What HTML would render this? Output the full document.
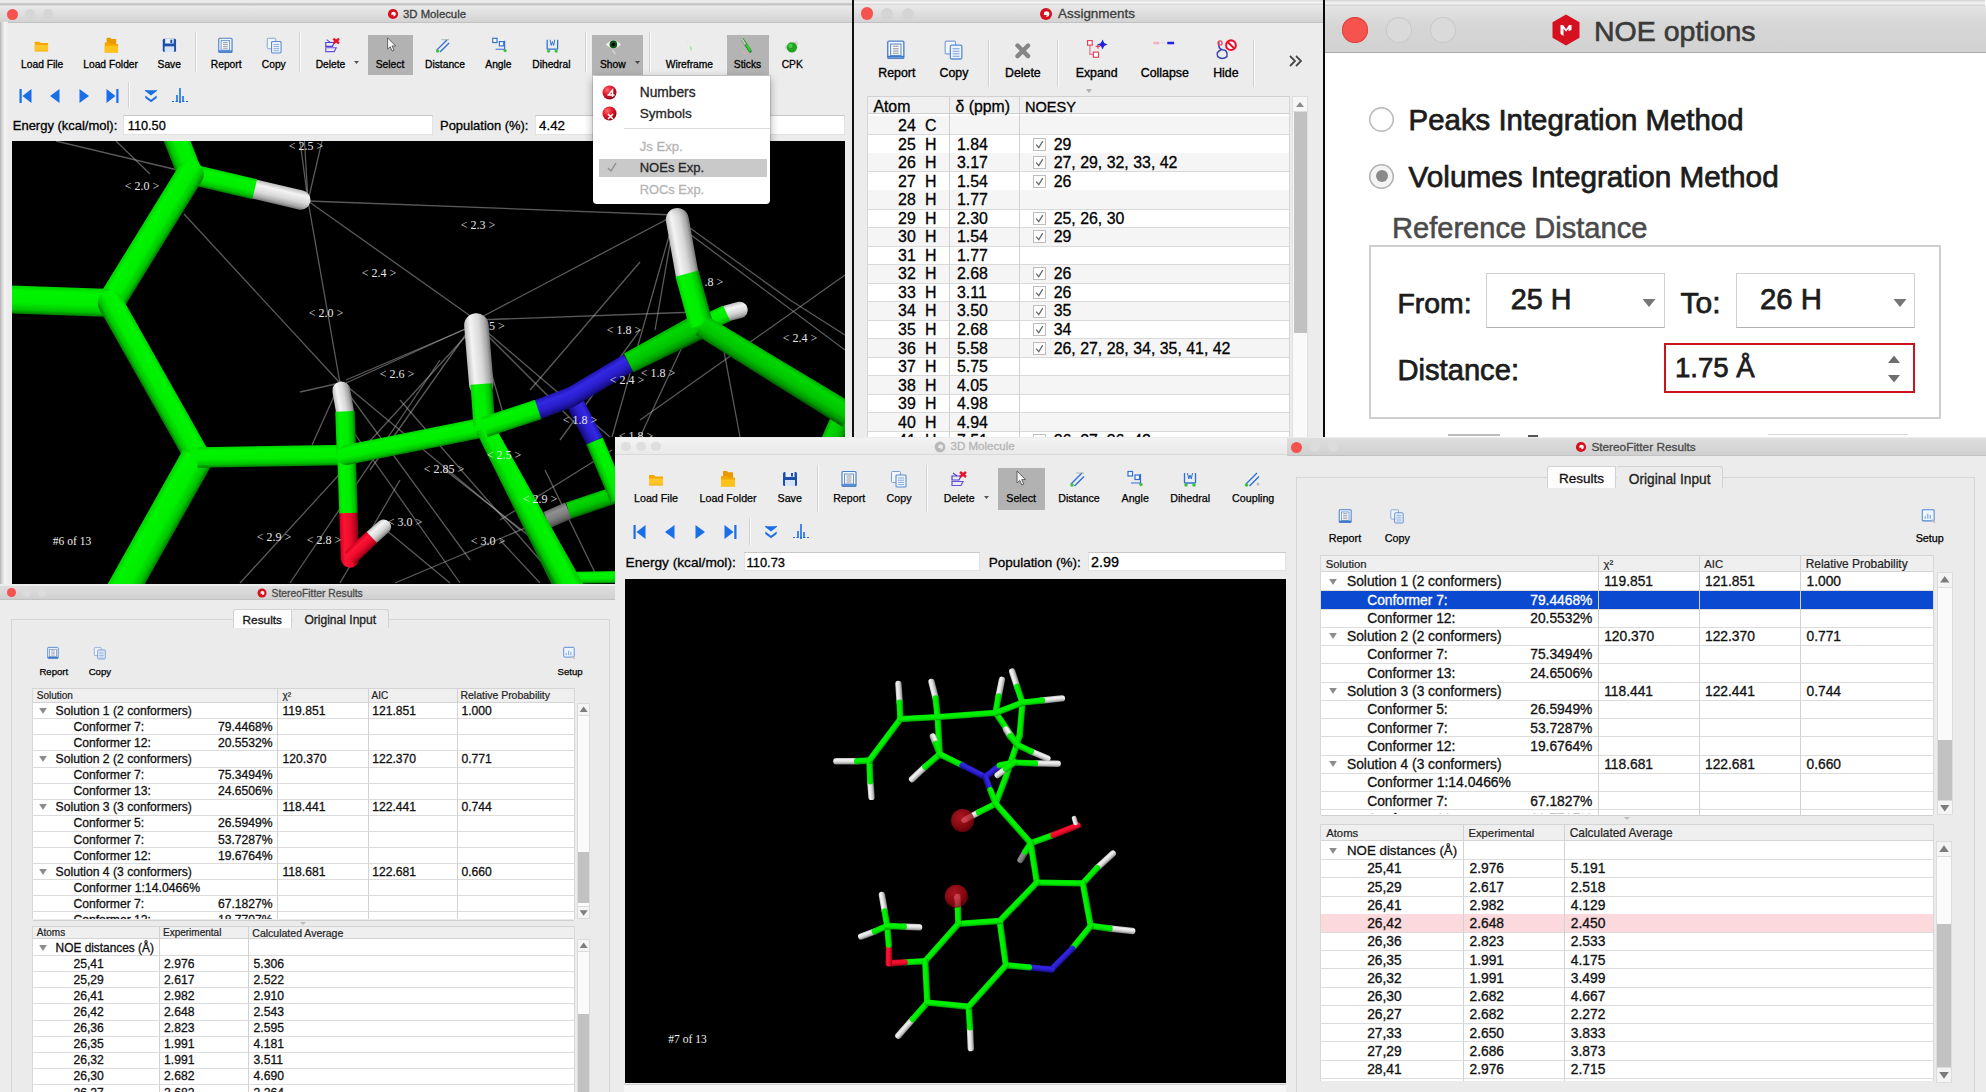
<!DOCTYPE html><html><head><meta charset="utf-8"><title>UI</title><style>html,body{margin:0;padding:0;background:#ececec}
body{width:1986px;height:1092px;overflow:hidden;position:relative;font-family:"Liberation Sans",sans-serif}
#r{position:absolute;left:0;top:0;width:1986px;height:1092px;overflow:hidden}
#r div,#r svg{position:absolute}
.t{white-space:pre;-webkit-text-stroke-width:0.3px}
#r svg{overflow:visible}
</style></head><body><div id="r"><div style="left:0px;top:0px;width:853px;height:590px;background:#ececec;"></div><div style="left:0px;top:0px;width:853px;height:6px;background:linear-gradient(#e6e6e6,#efefef 35%,#bdbdbd 70%,#e2e2e2);"></div><div style="left:0px;top:6px;width:853px;height:17px;background:linear-gradient(#e9e9e9,#d3d3d3);border-bottom:1px solid #c2c2c2;box-sizing:border-box;"></div><div style="left:0px;top:22px;width:8px;height:562px;background:linear-gradient(to right,#b0b0b0,#d8d8d8 25%,#f3f3f3 60%,#ececec);"></div><div style="left:6.5px;top:8.5px;width:11.0px;height:11.0px;background:#f6534f;border-radius:50%;"></div><div style="left:25px;top:9px;width:10px;height:10px;background:#d6d6d6;border-radius:50%;"></div><div style="left:43px;top:9px;width:10px;height:10px;background:#d6d6d6;border-radius:50%;"></div><svg style="left:386px;top:7px;" width="14" height="14" viewBox="0 0 14 14"><g transform="translate(7,7) scale(0.85)"><circle cx="0" cy="0" r="6" fill="#d6101f"/><circle cx="0.6" cy="0" r="2.7" fill="#fff"/><path d="M-2.5,1 L-0.5,3.5 L1,1z" fill="#d6101f"/></g></svg><div class="t" style="top:8px;font-size:11.34px;line-height:12px;color:#3c3c3c;white-space:pre;left:403px;">3D Molecule</div><div style="left:368px;top:35px;width:45px;height:40px;background:#b2b2b2;"></div><div style="left:592px;top:35px;width:51px;height:40px;background:#b4b4b4;"></div><div style="left:727px;top:35px;width:42px;height:40px;background:#b4b4b4;"></div><svg style="left:30.1px;top:34.6px;" width="22.799999999999997" height="22.799999999999997" viewBox="0 0 22.799999999999997 22.799999999999997"><g transform="translate(11.399999999999999,11.399999999999999) scale(0.95)"><path d="M-7,-5 h5 l1.5,1.5 h7.5 v9 h-14z" fill="#f5a800"/><path d="M-7,-1.5 h14 v6 h-14z" fill="#ffc629"/></g></svg><div class="t" style="top:59px;font-size:10.25px;line-height:11px;color:#000;white-space:pre;left:21.12px;-webkit-text-stroke:0.3px #000;">Load File</div><svg style="left:99.6px;top:34.1px;" width="22.799999999999997" height="22.799999999999997" viewBox="0 0 22.799999999999997 22.799999999999997"><g transform="translate(11.399999999999999,11.399999999999999) scale(0.95)"><path d="M-5,-8 h4 l1,1.2 h5 v6 h-10z" fill="#e89a00"/><path d="M-7,-3 h5 l1.5,1.5 h7.5 v9 h-14z" fill="#f5a800"/><path d="M-7,0.5 h14 v7 h-14z" fill="#ffc21a"/></g></svg><div class="t" style="top:59px;font-size:10.25px;line-height:11px;color:#000;white-space:pre;left:83.25px;-webkit-text-stroke:0.3px #000;">Load Folder</div><svg style="left:157.6px;top:34.1px;" width="22.799999999999997" height="22.799999999999997" viewBox="0 0 22.799999999999997 22.799999999999997"><g transform="translate(11.399999999999999,11.399999999999999) scale(0.95)"><rect x="-7" y="-7" width="14" height="14" rx="1.5" fill="#1c4fa8"/><rect x="-4.5" y="-7" width="9" height="5" fill="#e8eefc"/><rect x="1" y="-6" width="2" height="3.5" fill="#1c4fa8"/><rect x="-5" y="1" width="10" height="6" fill="#d8e2f8"/></g></svg><div class="t" style="top:59px;font-size:10.25px;line-height:11px;color:#000;white-space:pre;left:157.57px;-webkit-text-stroke:0.3px #000;">Save</div><div style="left:195px;top:32px;width:1px;height:40px;background:#d2d2d2;"></div><div style="left:196px;top:32px;width:1px;height:40px;background:#fafafa;"></div><svg style="left:213.6px;top:34.1px;" width="22.799999999999997" height="22.799999999999997" viewBox="0 0 22.799999999999997 22.799999999999997"><g transform="translate(11.399999999999999,11.399999999999999) scale(0.95)"><rect x="-7" y="-7.5" width="14" height="15" rx="1" fill="#f6f9fe" stroke="#4a80cc" stroke-width="1.2"/><rect x="-4.5" y="-5" width="9" height="10" fill="none" stroke="#5a86c8" stroke-width="0.9"/><path d="M-2.5,-3h5M-2.5,-1h5M-2.5,1h5M-2.5,3h5" stroke="#8a8f99" stroke-width="0.9"/><path d="M-7,6 h14" stroke="#3f78c9" stroke-width="1.6"/></g></svg><div class="t" style="top:59px;font-size:10.25px;line-height:11px;color:#000;white-space:pre;left:210.82px;-webkit-text-stroke:0.3px #000;">Report</div><svg style="left:262.6px;top:34.1px;" width="22.799999999999997" height="22.799999999999997" viewBox="0 0 22.799999999999997 22.799999999999997"><g transform="translate(11.399999999999999,11.399999999999999) scale(0.95)"><rect x="-7.5" y="-7.5" width="9" height="11" rx="1" fill="#f2f6fc" stroke="#7c9fd2" stroke-width="1"/><rect x="-3" y="-4" width="10" height="12" rx="1" fill="#eef3fb" stroke="#5b8ad0" stroke-width="1.1"/><path d="M-1,-1h6M-1,1.2h6M-1,3.4h6M-1,5.6h6" stroke="#7aa0d8" stroke-width="0.9"/></g></svg><div class="t" style="top:59px;font-size:10.25px;line-height:11px;color:#000;white-space:pre;left:261.79px;-webkit-text-stroke:0.3px #000;">Copy</div><div style="left:299px;top:32px;width:1px;height:40px;background:#d2d2d2;"></div><div style="left:300px;top:32px;width:1px;height:40px;background:#fafafa;"></div><svg style="left:320.6px;top:34.1px;" width="22.799999999999997" height="22.799999999999997" viewBox="0 0 22.799999999999997 22.799999999999997"><g transform="translate(11.399999999999999,11.399999999999999) scale(0.95)"><path d="M-7,-3 h9 l-2,4 h-7z" fill="none" stroke="#4a3fd0" stroke-width="1.2"/><path d="M-7,2.5 h11 l-2,4 h-9z" fill="none" stroke="#6a4fe0" stroke-width="1.2"/><path d="M-6,-6 l4,3" stroke="#4a3fd0" stroke-width="1.1"/><path d="M1,-7 l6,5 M7,-7 l-6,5" stroke="#e8102a" stroke-width="2.4"/></g></svg><div class="t" style="top:59px;font-size:10.25px;line-height:11px;color:#000;white-space:pre;left:315.64px;-webkit-text-stroke:0.3px #000;">Delete</div><svg style="left:353px;top:60px;" width="8" height="5" viewBox="0 0 8 5"><path d="M1,1 h5 l-2.5,3z" fill="#555"/></svg><svg style="left:378.6px;top:34.1px;" width="22.799999999999997" height="22.799999999999997" viewBox="0 0 22.799999999999997 22.799999999999997"><g transform="translate(11.399999999999999,11.399999999999999) scale(0.95)"><path d="M-3,-8 v12 l2.8,-2.6 2,4.6 2,-0.9 -2,-4.5 3.8,0z" fill="#f4f4f4" stroke="#555" stroke-width="0.9"/></g></svg><div class="t" style="top:59px;font-size:10.25px;line-height:11px;color:#000;white-space:pre;left:375.76px;-webkit-text-stroke:0.3px #000;">Select</div><svg style="left:430.6px;top:34.1px;" width="22.799999999999997" height="22.799999999999997" viewBox="0 0 22.799999999999997 22.799999999999997"><g transform="translate(11.399999999999999,11.399999999999999) scale(0.95)"><path d="M-6,5 L5,-6 M-2.5,7 L7,-2.5" stroke="#2d6fd6" stroke-width="1.4"/><path d="M-1,-6 h8" stroke="#9aa" stroke-width="0.8"/><circle cx="-5" cy="6" r="1.8" fill="#3fc23f"/></g></svg><div class="t" style="top:59px;font-size:10.25px;line-height:11px;color:#000;white-space:pre;left:425.06px;-webkit-text-stroke:0.3px #000;">Distance</div><svg style="left:488.1px;top:34.1px;" width="22.799999999999997" height="22.799999999999997" viewBox="0 0 22.799999999999997 22.799999999999997"><g transform="translate(11.399999999999999,11.399999999999999) scale(0.95)"><rect x="-7" y="-7.5" width="4.5" height="4.5" fill="#fff" stroke="#2d6fd6" stroke-width="1.2"/><rect x="0" y="-4" width="4.5" height="4.5" fill="#fff" stroke="#2d6fd6" stroke-width="1.2"/><path d="M-4,4 h10 M5.5,-5 v11" stroke="#2d6fd6" stroke-width="1.2"/><circle cx="6" cy="5.5" r="1.7" fill="#3fc23f"/></g></svg><div class="t" style="top:59px;font-size:10.25px;line-height:11px;color:#000;white-space:pre;left:485.34px;-webkit-text-stroke:0.3px #000;">Angle</div><svg style="left:540.6px;top:34.1px;" width="22.799999999999997" height="22.799999999999997" viewBox="0 0 22.799999999999997 22.799999999999997"><g transform="translate(11.399999999999999,11.399999999999999) scale(0.95)"><path d="M-5.5,-6 v10 M5.5,-6 v10 M-5.5,4 h11" stroke="#2d6fd6" stroke-width="1.3" fill="none"/><path d="M-2.5,-6 l1.2,6 1.3,-4 1.3,4 1.2,-6" stroke="#2d6fd6" stroke-width="1" fill="none"/><circle cx="-4" cy="6" r="1.8" fill="#3fc23f"/><circle cx="4" cy="6" r="1.8" fill="#3fc23f"/></g></svg><div class="t" style="top:59px;font-size:10.25px;line-height:11px;color:#000;white-space:pre;left:532.26px;-webkit-text-stroke:0.3px #000;">Dihedral</div><div style="left:585px;top:32px;width:1px;height:40px;background:#d2d2d2;"></div><div style="left:586px;top:32px;width:1px;height:40px;background:#fafafa;"></div><svg style="left:601.6px;top:33.1px;" width="22.799999999999997" height="22.799999999999997" viewBox="0 0 22.799999999999997 22.799999999999997"><g transform="translate(11.399999999999999,11.399999999999999) scale(0.95)"><path d="M-8,0 Q0,-8 8,0 Q0,8 -8,0z" fill="#f2f2f2" stroke="#cfcfcf" stroke-width="0.6"/><circle cx="0" cy="0" r="4" fill="#0b5a0b"/><circle cx="0" cy="0" r="2" fill="#000"/><path d="M-1,6 l3,4" stroke="#ddd" stroke-width="1.2"/></g></svg><div class="t" style="top:59px;font-size:10.25px;line-height:11px;color:#000;white-space:pre;left:600.03px;-webkit-text-stroke:0.3px #000;">Show</div><svg style="left:634px;top:60px;" width="8" height="5" viewBox="0 0 8 5"><path d="M1,1 h5 l-2.5,3z" fill="#444"/></svg><div style="left:649px;top:32px;width:1px;height:40px;background:#d2d2d2;"></div><div style="left:650px;top:32px;width:1px;height:40px;background:#fafafa;"></div><svg style="left:678.6px;top:34.6px;" width="22.799999999999997" height="22.799999999999997" viewBox="0 0 22.799999999999997 22.799999999999997"><g transform="translate(11.399999999999999,11.399999999999999) scale(0.95)"><path d="M-4,-6 L1,2 L1,7" stroke="#e8e8e8" stroke-width="1.6" fill="none"/><path d="M0,0 L1,4" stroke="#9fe89f" stroke-width="1.6"/></g></svg><div class="t" style="top:59px;font-size:10.25px;line-height:11px;color:#000;white-space:pre;left:665.72px;-webkit-text-stroke:0.3px #000;">Wireframe</div><svg style="left:735.6px;top:34.6px;" width="22.799999999999997" height="22.799999999999997" viewBox="0 0 22.799999999999997 22.799999999999997"><g transform="translate(11.399999999999999,11.399999999999999) scale(0.95)"><path d="M-5,-7 L3,5" stroke="#1e8a1e" stroke-width="3.2" stroke-linecap="round"/><path d="M-6,-8 L-2,-2" stroke="#c8c8c8" stroke-width="2"/><path d="M-1,-2 L3,5" stroke="#2ed12e" stroke-width="2"/><path d="M-6,4 L-2,8" stroke="#d8b0b0" stroke-width="1.5"/></g></svg><div class="t" style="top:59px;font-size:10.25px;line-height:11px;color:#000;white-space:pre;left:733.83px;-webkit-text-stroke:0.3px #000;">Sticks</div><svg style="left:780.1px;top:34.6px;" width="22.799999999999997" height="22.799999999999997" viewBox="0 0 22.799999999999997 22.799999999999997"><g transform="translate(11.399999999999999,11.399999999999999) scale(0.95)"><circle cx="-4" cy="1" r="3" fill="#d9d9d9"/><circle cx="4.5" cy="-3" r="2.5" fill="#e8c8d8"/><circle cx="0.5" cy="1" r="5.5" fill="#1fa51f"/><circle cx="-1" cy="-0.5" r="2.2" fill="#48cf48"/><circle cx="1" cy="-6" r="2" fill="#e8e8e8"/></g></svg><div class="t" style="top:59px;font-size:10.25px;line-height:11px;color:#000;white-space:pre;left:781.66px;-webkit-text-stroke:0.3px #000;">CPK</div><svg style="left:16.5px;top:87px;" width="18" height="18" viewBox="0 0 18 18"><g transform="translate(9,9) scale(1.0)"><rect x="-6.5" y="-7" width="2.2" height="14" fill="#1a6fe8"/><path d="M5.5,-7 v14 l-9,-7z" fill="#1a6fe8"/></g></svg><svg style="left:46px;top:87px;" width="18" height="18" viewBox="0 0 18 18"><g transform="translate(9,9) scale(1.0)"><path d="M4.5,-7 v14 l-9.5,-7z" fill="#1a6fe8"/></g></svg><svg style="left:74.5px;top:87px;" width="18" height="18" viewBox="0 0 18 18"><g transform="translate(9,9) scale(1.0)"><path d="M-4.5,-7 v14 l9.5,-7z" fill="#1a6fe8"/></g></svg><svg style="left:103px;top:87px;" width="18" height="18" viewBox="0 0 18 18"><g transform="translate(9,9) scale(1.0)"><rect x="4.3" y="-7" width="2.2" height="14" fill="#1a6fe8"/><path d="M-5.5,-7 v14 l9,-7z" fill="#1a6fe8"/></g></svg><div style="left:128px;top:82px;width:1px;height:26px;background:#d2d2d2;"></div><div style="left:129px;top:82px;width:1px;height:26px;background:#fafafa;"></div><svg style="left:142px;top:87px;" width="18" height="18" viewBox="0 0 18 18"><g transform="translate(9,9) scale(0.95)"><path d="M-6,-6 h12 l-6,4.5z" fill="#1a6fe8"/><path d="M-6,-0.5 l6,4.5 6,-4.5 v2.5 l-6,4.5 -6,-4.5z" fill="#1a6fe8"/><path d="M-6,-6 l6,4.5 6,-4.5" fill="none" stroke="#1a6fe8" stroke-width="1.5"/></g></svg><svg style="left:170px;top:86px;" width="20" height="20" viewBox="0 0 20 20"><g transform="translate(10,10) scale(1.0)"><path d="M0,-8 v15" stroke="#1a6fe8" stroke-width="1.6"/><path d="M-3,-1 v7 M3,0 v6" stroke="#1a6fe8" stroke-width="1.6"/><path d="M-8,5.5 h16" stroke="#1a6fe8" stroke-width="1" stroke-dasharray="2 1.5"/></g></svg><div class="t" style="top:118px;font-size:12.97px;line-height:15px;color:#000;white-space:pre;left:12.8px;">Energy (kcal/mol):</div><div style="left:123px;top:115px;width:310px;height:20px;background:#fff;box-shadow:inset 0 1px 0 #c9c9c9, inset 0 0 0 1px #e2e2e2;"></div><div class="t" style="top:118px;font-size:12.73px;line-height:15px;color:#000;white-space:pre;left:127.8px;">110.50</div><div class="t" style="top:118px;font-size:12.95px;line-height:15px;color:#000;white-space:pre;left:440px;">Population (%):</div><div style="left:535px;top:115px;width:310px;height:20px;background:#fff;box-shadow:inset 0 1px 0 #c9c9c9, inset 0 0 0 1px #e2e2e2;"></div><div class="t" style="top:118px;font-size:13.36px;line-height:15px;color:#000;white-space:pre;left:539px;">4.42</div><svg style="left:12px;top:141px;background:#000;overflow:hidden" width="833" height="443" viewBox="12 141 833 443"><line x1="308" y1="201" x2="300" y2="141" stroke="#b4b4b4" stroke-width="1.3" opacity="0.5"/><line x1="308" y1="201" x2="304.5" y2="141" stroke="#b4b4b4" stroke-width="1.3" opacity="0.5"/><line x1="308" y1="201" x2="322" y2="141" stroke="#b4b4b4" stroke-width="1.3" opacity="0.5"/><line x1="308" y1="201" x2="675" y2="215" stroke="#b4b4b4" stroke-width="1.3" opacity="0.5"/><line x1="308" y1="201" x2="476" y2="320" stroke="#b4b4b4" stroke-width="1.3" opacity="0.5"/><line x1="308" y1="201" x2="340" y2="383" stroke="#b4b4b4" stroke-width="1.3" opacity="0.5"/><line x1="184" y1="214" x2="340" y2="383" stroke="#b4b4b4" stroke-width="1.3" opacity="0.5"/><line x1="56" y1="141" x2="186" y2="172" stroke="#b4b4b4" stroke-width="1.3" opacity="0.5"/><line x1="116" y1="141" x2="150" y2="174" stroke="#b4b4b4" stroke-width="1.3" opacity="0.5"/><line x1="476" y1="320" x2="675" y2="215" stroke="#b4b4b4" stroke-width="1.3" opacity="0.5"/><line x1="476" y1="320" x2="697" y2="312" stroke="#b4b4b4" stroke-width="1.3" opacity="0.5"/><line x1="346" y1="383" x2="476" y2="324" stroke="#b4b4b4" stroke-width="1.3" opacity="0.5"/><line x1="346" y1="380" x2="468" y2="328" stroke="#b4b4b4" stroke-width="1.3" opacity="0.5"/><line x1="340" y1="383" x2="312" y2="445" stroke="#b4b4b4" stroke-width="1.3" opacity="0.5"/><line x1="340" y1="383" x2="300" y2="392" stroke="#b4b4b4" stroke-width="1.3" opacity="0.5"/><line x1="348" y1="393" x2="470" y2="560" stroke="#b4b4b4" stroke-width="1.3" opacity="0.5"/><line x1="348" y1="387" x2="520" y2="530" stroke="#b4b4b4" stroke-width="1.3" opacity="0.5"/><line x1="476" y1="324" x2="592" y2="440" stroke="#b4b4b4" stroke-width="1.3" opacity="0.5"/><line x1="480" y1="326" x2="610" y2="437" stroke="#b4b4b4" stroke-width="1.3" opacity="0.5"/><line x1="476" y1="320" x2="370" y2="470" stroke="#b4b4b4" stroke-width="1.3" opacity="0.5"/><line x1="476" y1="320" x2="505" y2="420" stroke="#b4b4b4" stroke-width="1.3" opacity="0.5"/><line x1="675" y1="215" x2="655" y2="330" stroke="#b4b4b4" stroke-width="1.3" opacity="0.5"/><line x1="675" y1="215" x2="612" y2="437" stroke="#b4b4b4" stroke-width="1.3" opacity="0.5"/><line x1="683" y1="229" x2="845" y2="350" stroke="#b4b4b4" stroke-width="1.3" opacity="0.5"/><line x1="683" y1="223" x2="790" y2="300" stroke="#b4b4b4" stroke-width="1.3" opacity="0.5"/><line x1="845" y1="275" x2="640" y2="420" stroke="#b4b4b4" stroke-width="1.3" opacity="0.5"/><line x1="790" y1="300" x2="845" y2="335" stroke="#b4b4b4" stroke-width="1.3" opacity="0.5"/><line x1="720" y1="330" x2="740" y2="437" stroke="#b4b4b4" stroke-width="1.3" opacity="0.5"/><line x1="690" y1="330" x2="640" y2="437" stroke="#b4b4b4" stroke-width="1.3" opacity="0.5"/><line x1="560" y1="440" x2="640" y2="330" stroke="#b4b4b4" stroke-width="1.3" opacity="0.5"/><line x1="530" y1="390" x2="640" y2="262" stroke="#b4b4b4" stroke-width="1.3" opacity="0.5"/><line x1="465" y1="337" x2="240" y2="583" stroke="#b4b4b4" stroke-width="1.3" opacity="0.5"/><line x1="440" y1="360" x2="290" y2="583" stroke="#b4b4b4" stroke-width="1.3" opacity="0.5"/><line x1="400" y1="480" x2="340" y2="583" stroke="#b4b4b4" stroke-width="1.3" opacity="0.5"/><line x1="352" y1="430" x2="460" y2="583" stroke="#b4b4b4" stroke-width="1.3" opacity="0.5"/><line x1="400" y1="400" x2="560" y2="583" stroke="#b4b4b4" stroke-width="1.3" opacity="0.5"/><line x1="445" y1="470" x2="560" y2="560" stroke="#b4b4b4" stroke-width="1.3" opacity="0.5"/><line x1="615" y1="490" x2="395" y2="583" stroke="#b4b4b4" stroke-width="1.3" opacity="0.5"/><line x1="612" y1="450" x2="500" y2="520" stroke="#b4b4b4" stroke-width="1.3" opacity="0.5"/><line x1="545" y1="470" x2="600" y2="583" stroke="#b4b4b4" stroke-width="1.3" opacity="0.5"/><line x1="380" y1="525" x2="450" y2="583" stroke="#b4b4b4" stroke-width="1.3" opacity="0.5"/><line x1="500" y1="540" x2="540" y2="583" stroke="#b4b4b4" stroke-width="1.3" opacity="0.5"/><linearGradient id="g1" gradientUnits="userSpaceOnUse" x1="554.31" y1="507.28" x2="561.29" y2="523.32"><stop offset="0" stop-color="#6a6a6a"/><stop offset="0.25" stop-color="#909090"/><stop offset="0.6" stop-color="#7c7c7c"/><stop offset="0.85" stop-color="#606060"/><stop offset="1" stop-color="#404040"/></linearGradient><line x1="547" y1="520" x2="568.6" y2="510.6" stroke="url(#g1)" stroke-width="17.5" stroke-linecap="butt"/><linearGradient id="g2" gradientUnits="userSpaceOnUse" x1="590.59" y1="494.24" x2="596.01" y2="510.36"><stop offset="0" stop-color="#00b000"/><stop offset="0.18" stop-color="#00d800"/><stop offset="0.6" stop-color="#00c400"/><stop offset="0.85" stop-color="#009800"/><stop offset="1" stop-color="#005c00"/></linearGradient><line x1="568.6" y1="510.6" x2="618" y2="494" stroke="url(#g2)" stroke-width="17" stroke-linecap="butt"/><linearGradient id="g3" gradientUnits="userSpaceOnUse" x1="591.26" y1="414.95" x2="575.24" y2="423.15"><stop offset="0" stop-color="#2016b0"/><stop offset="0.25" stop-color="#3428e4"/><stop offset="0.6" stop-color="#2a1ecc"/><stop offset="0.85" stop-color="#1c129a"/><stop offset="1" stop-color="#100a60"/></linearGradient><line x1="572" y1="397.1" x2="594.5" y2="441" stroke="url(#g3)" stroke-width="18" stroke-linecap="butt"/><linearGradient id="g4" gradientUnits="userSpaceOnUse" x1="615.04" y1="466.5" x2="598.46" y2="473.5"><stop offset="0" stop-color="#00d000"/><stop offset="0.18" stop-color="#00f400"/><stop offset="0.6" stop-color="#00ee00"/><stop offset="0.85" stop-color="#00c400"/><stop offset="1" stop-color="#007a00"/></linearGradient><line x1="594.5" y1="441" x2="619" y2="499" stroke="url(#g4)" stroke-width="18" stroke-linecap="butt"/><linearGradient id="g5" gradientUnits="userSpaceOnUse" x1="590.39" y1="571.5" x2="590.61" y2="583.5"><stop offset="0" stop-color="#00d000"/><stop offset="0.18" stop-color="#00f400"/><stop offset="0.6" stop-color="#00ee00"/><stop offset="0.85" stop-color="#00c400"/><stop offset="1" stop-color="#007a00"/></linearGradient><line x1="563" y1="578" x2="618" y2="577" stroke="url(#g5)" stroke-width="12" stroke-linecap="butt"/><linearGradient id="g6" gradientUnits="userSpaceOnUse" x1="827.44" y1="424.56" x2="847.56" y2="433.44"><stop offset="0" stop-color="#00b000"/><stop offset="0.18" stop-color="#00d800"/><stop offset="0.6" stop-color="#00c400"/><stop offset="0.85" stop-color="#009800"/><stop offset="1" stop-color="#005c00"/></linearGradient><line x1="845" y1="412" x2="830" y2="446" stroke="url(#g6)" stroke-width="22" stroke-linecap="butt"/><linearGradient id="g7" gradientUnits="userSpaceOnUse" x1="194.39" y1="150.94" x2="171.11" y2="160.06"><stop offset="0" stop-color="#00d000"/><stop offset="0.18" stop-color="#00f400"/><stop offset="0.6" stop-color="#00ee00"/><stop offset="0.85" stop-color="#00c400"/><stop offset="1" stop-color="#007a00"/></linearGradient><line x1="175.5" y1="137" x2="190" y2="174" stroke="url(#g7)" stroke-width="25" stroke-linecap="round"/><linearGradient id="g8" gradientUnits="userSpaceOnUse" x1="279.93" y1="185.11" x2="275.47" y2="204.09"><stop offset="0" stop-color="#bcbcbc"/><stop offset="0.25" stop-color="#f4f4f4"/><stop offset="0.6" stop-color="#d8d8d8"/><stop offset="0.85" stop-color="#a8a8a8"/><stop offset="1" stop-color="#707070"/></linearGradient><line x1="254.7" y1="189.2" x2="300.7" y2="200" stroke="url(#g8)" stroke-width="19.5" stroke-linecap="round"/><linearGradient id="g9" gradientUnits="userSpaceOnUse" x1="224.69" y1="171.62" x2="220.01" y2="191.58"><stop offset="0" stop-color="#00d000"/><stop offset="0.18" stop-color="#00f400"/><stop offset="0.6" stop-color="#00ee00"/><stop offset="0.85" stop-color="#00c400"/><stop offset="1" stop-color="#007a00"/></linearGradient><line x1="190" y1="174" x2="254.7" y2="189.2" stroke="url(#g9)" stroke-width="20.5" stroke-linecap="butt"/><linearGradient id="g10" gradientUnits="userSpaceOnUse" x1="138.54" y1="231.29" x2="161.96" y2="245.71"><stop offset="0" stop-color="#00d000"/><stop offset="0.18" stop-color="#00f400"/><stop offset="0.6" stop-color="#00ee00"/><stop offset="0.85" stop-color="#00c400"/><stop offset="1" stop-color="#007a00"/></linearGradient><line x1="190" y1="174" x2="110.5" y2="303" stroke="url(#g10)" stroke-width="27.5" stroke-linecap="round"/><linearGradient id="g11" gradientUnits="userSpaceOnUse" x1="58.75" y1="287.16" x2="57.75" y2="315.14"><stop offset="0" stop-color="#00d000"/><stop offset="0.18" stop-color="#00f400"/><stop offset="0.6" stop-color="#00ee00"/><stop offset="0.85" stop-color="#00c400"/><stop offset="1" stop-color="#007a00"/></linearGradient><line x1="110.5" y1="303" x2="6" y2="299.3" stroke="url(#g11)" stroke-width="28" stroke-linecap="butt"/><linearGradient id="g12" gradientUnits="userSpaceOnUse" x1="165.1" y1="373.73" x2="142.9" y2="386.27"><stop offset="0" stop-color="#00d000"/><stop offset="0.18" stop-color="#00f400"/><stop offset="0.6" stop-color="#00ee00"/><stop offset="0.85" stop-color="#00c400"/><stop offset="1" stop-color="#007a00"/></linearGradient><line x1="110.5" y1="303" x2="197.5" y2="457" stroke="url(#g12)" stroke-width="25.5" stroke-linecap="round"/><linearGradient id="g13" gradientUnits="userSpaceOnUse" x1="144.33" y1="518.55" x2="172.67" y2="534.45"><stop offset="0" stop-color="#00d000"/><stop offset="0.18" stop-color="#00f400"/><stop offset="0.6" stop-color="#00ee00"/><stop offset="0.85" stop-color="#00c400"/><stop offset="1" stop-color="#007a00"/></linearGradient><line x1="197.5" y1="457" x2="119.5" y2="596" stroke="url(#g13)" stroke-width="32.5" stroke-linecap="butt"/><linearGradient id="g14" gradientUnits="userSpaceOnUse" x1="271.83" y1="446.0" x2="272.17" y2="466.5"><stop offset="0" stop-color="#00d000"/><stop offset="0.18" stop-color="#00f400"/><stop offset="0.6" stop-color="#00ee00"/><stop offset="0.85" stop-color="#00c400"/><stop offset="1" stop-color="#007a00"/></linearGradient><line x1="197.5" y1="457.5" x2="346.5" y2="455" stroke="url(#g14)" stroke-width="20.5" stroke-linecap="butt"/><linearGradient id="g15" gradientUnits="userSpaceOnUse" x1="334.29" y1="402.48" x2="352.01" y2="399.32"><stop offset="0" stop-color="#bcbcbc"/><stop offset="0.25" stop-color="#f4f4f4"/><stop offset="0.6" stop-color="#d8d8d8"/><stop offset="0.85" stop-color="#a8a8a8"/><stop offset="1" stop-color="#707070"/></linearGradient><line x1="345" y1="411.3" x2="341.3" y2="390.5" stroke="url(#g15)" stroke-width="18" stroke-linecap="round"/><linearGradient id="g16" gradientUnits="userSpaceOnUse" x1="336.01" y1="433.48" x2="355.49" y2="432.82"><stop offset="0" stop-color="#00d000"/><stop offset="0.18" stop-color="#00f400"/><stop offset="0.6" stop-color="#00ee00"/><stop offset="0.85" stop-color="#00c400"/><stop offset="1" stop-color="#007a00"/></linearGradient><line x1="346.5" y1="455" x2="345" y2="411.3" stroke="url(#g16)" stroke-width="19.5" stroke-linecap="butt"/><linearGradient id="g17" gradientUnits="userSpaceOnUse" x1="340.1" y1="536.05" x2="358.4" y2="535.45"><stop offset="0" stop-color="#d00020"/><stop offset="0.25" stop-color="#fc1434"/><stop offset="0.6" stop-color="#ea0a2a"/><stop offset="0.85" stop-color="#b80420"/><stop offset="1" stop-color="#780010"/></linearGradient><line x1="348.5" y1="513" x2="350" y2="558.5" stroke="url(#g17)" stroke-width="18.3" stroke-linecap="round"/><linearGradient id="g18" gradientUnits="userSpaceOnUse" x1="338.26" y1="484.32" x2="356.74" y2="483.68"><stop offset="0" stop-color="#00d000"/><stop offset="0.18" stop-color="#00f400"/><stop offset="0.6" stop-color="#00ee00"/><stop offset="0.85" stop-color="#00c400"/><stop offset="1" stop-color="#007a00"/></linearGradient><line x1="346.5" y1="455" x2="348.5" y2="513" stroke="url(#g18)" stroke-width="18.5" stroke-linecap="butt"/><linearGradient id="g19" gradientUnits="userSpaceOnUse" x1="372.67" y1="526.59" x2="382.63" y2="537.81"><stop offset="0" stop-color="#bcbcbc"/><stop offset="0.25" stop-color="#f4f4f4"/><stop offset="0.6" stop-color="#d8d8d8"/><stop offset="0.85" stop-color="#a8a8a8"/><stop offset="1" stop-color="#707070"/></linearGradient><line x1="371.8" y1="537.4" x2="383.5" y2="527" stroke="url(#g19)" stroke-width="15" stroke-linecap="round"/><linearGradient id="g20" gradientUnits="userSpaceOnUse" x1="355.54" y1="542.03" x2="366.26" y2="553.37"><stop offset="0" stop-color="#d00020"/><stop offset="0.25" stop-color="#fc1434"/><stop offset="0.6" stop-color="#ea0a2a"/><stop offset="0.85" stop-color="#b80420"/><stop offset="1" stop-color="#780010"/></linearGradient><line x1="350" y1="558" x2="371.8" y2="537.4" stroke="url(#g20)" stroke-width="15.6" stroke-linecap="butt"/><linearGradient id="g21" gradientUnits="userSpaceOnUse" x1="413.53" y1="431.35" x2="417.47" y2="450.95"><stop offset="0" stop-color="#00d000"/><stop offset="0.18" stop-color="#00f400"/><stop offset="0.6" stop-color="#00ee00"/><stop offset="0.85" stop-color="#00c400"/><stop offset="1" stop-color="#007a00"/></linearGradient><line x1="346.5" y1="455" x2="484.5" y2="427.3" stroke="url(#g21)" stroke-width="20" stroke-linecap="round"/><linearGradient id="g22" gradientUnits="userSpaceOnUse" x1="540.11" y1="507.05" x2="518.89" y2="518.25"><stop offset="0" stop-color="#00d000"/><stop offset="0.18" stop-color="#00f400"/><stop offset="0.6" stop-color="#00ee00"/><stop offset="0.85" stop-color="#00c400"/><stop offset="1" stop-color="#007a00"/></linearGradient><polygon points="492.9,422.87 587.33,591.24 561.67,604.76 476.1,431.73" fill="url(#g22)"/><linearGradient id="g23" gradientUnits="userSpaceOnUse" x1="466.64" y1="355.77" x2="491.06" y2="353.73"><stop offset="0" stop-color="#bcbcbc"/><stop offset="0.25" stop-color="#f4f4f4"/><stop offset="0.6" stop-color="#d8d8d8"/><stop offset="0.85" stop-color="#a8a8a8"/><stop offset="1" stop-color="#707070"/></linearGradient><line x1="481.3" y1="384" x2="476.4" y2="325.5" stroke="url(#g23)" stroke-width="24.5" stroke-linecap="round"/><linearGradient id="g24" gradientUnits="userSpaceOnUse" x1="472.03" y1="406.45" x2="493.77" y2="404.85"><stop offset="0" stop-color="#00d000"/><stop offset="0.18" stop-color="#00f400"/><stop offset="0.6" stop-color="#00ee00"/><stop offset="0.85" stop-color="#00c400"/><stop offset="1" stop-color="#007a00"/></linearGradient><line x1="484.5" y1="427.3" x2="481.3" y2="384" stroke="url(#g24)" stroke-width="21.8" stroke-linecap="butt"/><linearGradient id="g25" gradientUnits="userSpaceOnUse" x1="551.02" y1="393.94" x2="558.08" y2="412.66"><stop offset="0" stop-color="#2016b0"/><stop offset="0.25" stop-color="#3428e4"/><stop offset="0.6" stop-color="#2a1ecc"/><stop offset="0.85" stop-color="#1c129a"/><stop offset="1" stop-color="#100a60"/></linearGradient><line x1="538.1" y1="409.5" x2="571" y2="397.1" stroke="url(#g25)" stroke-width="20" stroke-linecap="round"/><linearGradient id="g26" gradientUnits="userSpaceOnUse" x1="508.09" y1="408.72" x2="514.51" y2="428.08"><stop offset="0" stop-color="#00d000"/><stop offset="0.18" stop-color="#00f400"/><stop offset="0.6" stop-color="#00ee00"/><stop offset="0.85" stop-color="#00c400"/><stop offset="1" stop-color="#007a00"/></linearGradient><line x1="484.5" y1="427.3" x2="538.1" y2="409.5" stroke="url(#g26)" stroke-width="20.4" stroke-linecap="butt"/><linearGradient id="g27" gradientUnits="userSpaceOnUse" x1="594.84" y1="371.53" x2="604.86" y2="388.37"><stop offset="0" stop-color="#2016b0"/><stop offset="0.25" stop-color="#3428e4"/><stop offset="0.6" stop-color="#2a1ecc"/><stop offset="0.85" stop-color="#1c129a"/><stop offset="1" stop-color="#100a60"/></linearGradient><line x1="571" y1="397.1" x2="628.7" y2="362.8" stroke="url(#g27)" stroke-width="19.6" stroke-linecap="butt"/><linearGradient id="g28" gradientUnits="userSpaceOnUse" x1="659.61" y1="333.61" x2="670.39" y2="354.49"><stop offset="0" stop-color="#00b000"/><stop offset="0.18" stop-color="#00d800"/><stop offset="0.6" stop-color="#00c400"/><stop offset="0.85" stop-color="#009800"/><stop offset="1" stop-color="#005c00"/></linearGradient><polygon points="623.88,353.47 695.33,313.75 707.27,336.85 633.52,372.13" fill="url(#g28)"/><linearGradient id="g29" gradientUnits="userSpaceOnUse" x1="695.21" y1="314.37" x2="706.39" y2="336.73"><stop offset="0" stop-color="#00b000"/><stop offset="0.18" stop-color="#00d800"/><stop offset="0.6" stop-color="#00c400"/><stop offset="0.85" stop-color="#009800"/><stop offset="1" stop-color="#005c00"/></linearGradient><line x1="700.3" y1="325.8" x2="701.3" y2="325.3" stroke="url(#g29)" stroke-width="25" stroke-linecap="round"/><linearGradient id="g30" gradientUnits="userSpaceOnUse" x1="730.98" y1="303.73" x2="735.22" y2="319.67"><stop offset="0" stop-color="#bcbcbc"/><stop offset="0.25" stop-color="#f4f4f4"/><stop offset="0.6" stop-color="#d8d8d8"/><stop offset="0.85" stop-color="#a8a8a8"/><stop offset="1" stop-color="#707070"/></linearGradient><line x1="726.7" y1="313.4" x2="739.5" y2="310" stroke="url(#g30)" stroke-width="16.5" stroke-linecap="round"/><linearGradient id="g31" gradientUnits="userSpaceOnUse" x1="710.29" y1="311.43" x2="717.71" y2="327.27"><stop offset="0" stop-color="#00d000"/><stop offset="0.18" stop-color="#00f400"/><stop offset="0.6" stop-color="#00ee00"/><stop offset="0.85" stop-color="#00c400"/><stop offset="1" stop-color="#007a00"/></linearGradient><line x1="701.3" y1="325.3" x2="726.7" y2="313.4" stroke="url(#g31)" stroke-width="17.5" stroke-linecap="butt"/><linearGradient id="g32" gradientUnits="userSpaceOnUse" x1="670.83" y1="248.58" x2="693.47" y2="244.52"><stop offset="0" stop-color="#bcbcbc"/><stop offset="0.25" stop-color="#f4f4f4"/><stop offset="0.6" stop-color="#d8d8d8"/><stop offset="0.85" stop-color="#a8a8a8"/><stop offset="1" stop-color="#707070"/></linearGradient><line x1="687" y1="273.6" x2="677.3" y2="219.5" stroke="url(#g32)" stroke-width="23" stroke-linecap="round"/><linearGradient id="g33" gradientUnits="userSpaceOnUse" x1="682.58" y1="302.65" x2="705.72" y2="296.25"><stop offset="0" stop-color="#00d000"/><stop offset="0.18" stop-color="#00f400"/><stop offset="0.6" stop-color="#00ee00"/><stop offset="0.85" stop-color="#00c400"/><stop offset="1" stop-color="#007a00"/></linearGradient><line x1="701.3" y1="325.3" x2="687" y2="273.6" stroke="url(#g33)" stroke-width="24" stroke-linecap="butt"/><linearGradient id="g34" gradientUnits="userSpaceOnUse" x1="781.36" y1="360.53" x2="768.94" y2="380.77"><stop offset="0" stop-color="#00b000"/><stop offset="0.18" stop-color="#00d800"/><stop offset="0.6" stop-color="#00c400"/><stop offset="0.85" stop-color="#009800"/><stop offset="1" stop-color="#005c00"/></linearGradient><polygon points="707.06,315.93 855.67,405.14 842.33,426.86 695.54,334.67" fill="url(#g34)"/><text x="306" y="149.96" text-anchor="middle" font-family="Liberation Serif,serif" font-size="12" fill="#e6e6e6">&lt; 2.5 &gt;</text><text x="142" y="189.96" text-anchor="middle" font-family="Liberation Serif,serif" font-size="12" fill="#e6e6e6">&lt; 2.0 &gt;</text><text x="478" y="228.96" text-anchor="middle" font-family="Liberation Serif,serif" font-size="12" fill="#e6e6e6">&lt; 2.3 &gt;</text><text x="379" y="276.96" text-anchor="middle" font-family="Liberation Serif,serif" font-size="12" fill="#e6e6e6">&lt; 2.4 &gt;</text><text x="326" y="316.96" text-anchor="middle" font-family="Liberation Serif,serif" font-size="12" fill="#e6e6e6">&lt; 2.0 &gt;</text><text x="397" y="377.96" text-anchor="middle" font-family="Liberation Serif,serif" font-size="12" fill="#e6e6e6">&lt; 2.6 &gt;</text><text x="497" y="329.96" text-anchor="middle" font-family="Liberation Serif,serif" font-size="12" fill="#e6e6e6">5 &gt;</text><text x="624" y="333.96" text-anchor="middle" font-family="Liberation Serif,serif" font-size="12" fill="#e6e6e6">&lt; 1.8 &gt;</text><text x="714" y="285.96" text-anchor="middle" font-family="Liberation Serif,serif" font-size="12" fill="#e6e6e6">.8 &gt;</text><text x="800" y="341.96" text-anchor="middle" font-family="Liberation Serif,serif" font-size="12" fill="#e6e6e6">&lt; 2.4 &gt;</text><text x="658" y="376.96" text-anchor="middle" font-family="Liberation Serif,serif" font-size="12" fill="#e6e6e6">&lt; 1.8 &gt;</text><text x="627" y="383.96" text-anchor="middle" font-family="Liberation Serif,serif" font-size="12" fill="#e6e6e6">&lt; 2.4 &gt;</text><text x="580" y="423.96" text-anchor="middle" font-family="Liberation Serif,serif" font-size="12" fill="#e6e6e6">&lt; 1.8 &gt;</text><text x="636" y="439.96" text-anchor="middle" font-family="Liberation Serif,serif" font-size="12" fill="#e6e6e6">&lt; 1.8 &gt;</text><text x="444" y="472.96" text-anchor="middle" font-family="Liberation Serif,serif" font-size="12" fill="#e6e6e6">&lt; 2.85 &gt;</text><text x="504" y="458.96" text-anchor="middle" font-family="Liberation Serif,serif" font-size="12" fill="#e6e6e6">&lt; 2.5 &gt;</text><text x="274" y="540.96" text-anchor="middle" font-family="Liberation Serif,serif" font-size="12" fill="#e6e6e6">&lt; 2.9 &gt;</text><text x="324" y="543.96" text-anchor="middle" font-family="Liberation Serif,serif" font-size="12" fill="#e6e6e6">&lt; 2.8 &gt;</text><text x="405" y="525.96" text-anchor="middle" font-family="Liberation Serif,serif" font-size="12" fill="#e6e6e6">&lt; 3.0 &gt;</text><text x="488" y="544.96" text-anchor="middle" font-family="Liberation Serif,serif" font-size="12" fill="#e6e6e6">&lt; 3.0 &gt;</text><text x="540" y="502.96" text-anchor="middle" font-family="Liberation Serif,serif" font-size="12" fill="#e6e6e6">&lt; 2.9 &gt;</text><text x="72" y="544.795" text-anchor="middle" font-family="Liberation Serif,serif" font-size="11.5" fill="#f0f0f0">#6 of 13</text></svg><div style="left:593px;top:76px;width:177px;height:128px;background:#fff;box-shadow:0 3px 10px rgba(0,0,0,.35),0 0 0 1px rgba(0,0,0,.12);border-radius:0 0 4px 4px;"></div><svg style="left:601px;top:83.5px;" width="17" height="17" viewBox="0 0 17 17"><defs><radialGradient id="rs4" cx="35%" cy="30%" r="75%"><stop offset="0" stop-color="#ff6a6a"/><stop offset="0.5" stop-color="#e3152a"/><stop offset="1" stop-color="#8e0612"/></radialGradient></defs><circle cx="8.5" cy="8.5" r="7" fill="url(#rs4)"/><path d="M7.5,11 l4,-5 v7 M6.5,11 h7" stroke="#fff" stroke-width="1.4" fill="none"/></svg><svg style="left:601px;top:104.6px;" width="17" height="17" viewBox="0 0 17 17"><defs><radialGradient id="rsx" cx="35%" cy="30%" r="75%"><stop offset="0" stop-color="#ff6a6a"/><stop offset="0.5" stop-color="#e3152a"/><stop offset="1" stop-color="#8e0612"/></radialGradient></defs><circle cx="8.5" cy="8.5" r="7" fill="url(#rsx)"/><path d="M7,9 l5,5 M12,9 l-5,5" stroke="#fff" stroke-width="1.5"/></svg><div class="t" style="top:85px;font-size:13.78px;line-height:15px;color:#262626;white-space:pre;left:639.7px;">Numbers</div><div class="t" style="top:106px;font-size:13.64px;line-height:15px;color:#262626;white-space:pre;left:639.7px;">Symbols</div><div style="left:624px;top:128px;width:146px;height:1px;background:#dcdcdc;"></div><div class="t" style="top:139px;font-size:13.11px;line-height:15px;color:#b4b4b4;white-space:pre;left:639.7px;">Js Exp.</div><div style="left:599px;top:159px;width:168px;height:17.5px;background:#c9c9c9;"></div><svg style="left:606px;top:161px;" width="12" height="12" viewBox="0 0 12 12"><path d="M2,7 l3,3 l5,-8" stroke="#8c8c8c" stroke-width="1.4" fill="none"/></svg><div class="t" style="top:160px;font-size:13.04px;line-height:15px;color:#262626;white-space:pre;left:639.7px;">NOEs Exp.</div><div class="t" style="top:182px;font-size:12.9px;line-height:15px;color:#b4b4b4;white-space:pre;left:639.7px;">ROCs Exp.</div><div style="left:0px;top:584px;width:616px;height:508px;background:#ececec;"></div><div style="left:0px;top:585.5px;width:616px;height:14.5px;background:linear-gradient(#dedede,#d0d0d0);border-bottom:1px solid #c2c2c2;box-sizing:border-box;"></div><div style="left:6.9px;top:588.1px;width:9.2px;height:9.2px;background:#f6534f;border-radius:50%;"></div><div style="left:22.54px;top:588.5600000000001px;width:8.28px;height:8.28px;background:#dcdcdc;border-radius:50%;"></div><div style="left:37.72px;top:588.5600000000001px;width:8.28px;height:8.28px;background:#dcdcdc;border-radius:50%;"></div><svg style="left:255px;top:585.75px;" width="14" height="14" viewBox="0 0 14 14"><g transform="translate(7,7) scale(0.748)"><circle cx="0" cy="0" r="6" fill="#d6101f"/><circle cx="0.6" cy="0" r="2.7" fill="#fff"/><path d="M-2.5,1 L-0.5,3.5 L1,1z" fill="#d6101f"/></g></svg><div class="t" style="top:588px;font-size:10.32px;line-height:11px;color:#4a4a4a;white-space:pre;left:271.6px;">StereoFitter Results</div><div style="left:10.5px;top:618.5px;width:599px;height:478px;background:#ebebeb;border:1.6px solid #d6d6d6;box-sizing:border-box;"></div><div style="left:232.6px;top:608.6px;width:59.900000000000006px;height:19.799999999999955px;background:#fcfcfc;border:1.6px solid #d2d2d2;border-bottom:none;border-radius:3px 0 0 0;box-sizing:border-box;"></div><div style="left:292.5px;top:608.6px;width:96.19999999999999px;height:19.799999999999955px;background:#ececec;border:1.6px solid #d2d2d2;border-left:none;border-bottom:none;border-radius:0 3px 0 0;box-sizing:border-box;"></div><div class="t" style="top:613px;font-size:11.82px;line-height:14px;color:#111;white-space:pre;left:242.6px;">Results</div><div class="t" style="top:613px;font-size:12.07px;line-height:14px;color:#222;white-space:pre;left:304.4px;">Original Input</div><svg style="left:44.024px;top:644.424px;" width="17.951999999999998" height="17.951999999999998" viewBox="0 0 17.951999999999998 17.951999999999998"><g transform="translate(8.975999999999999,8.975999999999999) scale(0.748)"><rect x="-7" y="-7.5" width="14" height="15" rx="1" fill="#f6f9fe" stroke="#4a80cc" stroke-width="1.2"/><rect x="-4.5" y="-5" width="9" height="10" fill="none" stroke="#5a86c8" stroke-width="0.9"/><path d="M-2.5,-3h5M-2.5,-1h5M-2.5,1h5M-2.5,3h5" stroke="#8a8f99" stroke-width="0.9"/><path d="M-7,6 h14" stroke="#3f78c9" stroke-width="1.6"/></g></svg><div class="t" style="top:666px;font-size:9.6px;line-height:11px;color:#000;white-space:pre;left:39.39px;-webkit-text-stroke:0.25px #000;">Report</div><svg style="left:91.024px;top:644.424px;" width="17.951999999999998" height="17.951999999999998" viewBox="0 0 17.951999999999998 17.951999999999998"><g transform="translate(8.975999999999999,8.975999999999999) scale(0.748)"><rect x="-7.5" y="-7.5" width="9" height="11" rx="1" fill="#f2f6fc" stroke="#7c9fd2" stroke-width="1"/><rect x="-3" y="-4" width="10" height="12" rx="1" fill="#eef3fb" stroke="#5b8ad0" stroke-width="1.1"/><path d="M-1,-1h6M-1,1.2h6M-1,3.4h6M-1,5.6h6" stroke="#7aa0d8" stroke-width="0.9"/></g></svg><div class="t" style="top:666px;font-size:9.6px;line-height:11px;color:#000;white-space:pre;left:88.7px;-webkit-text-stroke:0.25px #000;">Copy</div><svg style="left:559.824px;top:644.424px;" width="17.951999999999998" height="17.951999999999998" viewBox="0 0 17.951999999999998 17.951999999999998"><g transform="translate(8.975999999999999,8.975999999999999) scale(0.748)"><rect x="-7" y="-7.5" width="14" height="13" rx="1" fill="#eef4fc" stroke="#4f86d4" stroke-width="1.2"/><path d="M-3.5,3 v-3 M-0.5,3 v-6 M2.5,3 v-4.5" stroke="#8ab0e4" stroke-width="1.6"/><path d="M4,4 l4,4" stroke="#bbb" stroke-width="1.6"/></g></svg><div class="t" style="top:666px;font-size:9.6px;line-height:11px;color:#000;white-space:pre;left:557.61px;-webkit-text-stroke:0.25px #000;">Setup</div><div style="left:32.8px;top:687.7px;width:541.0px;height:231.79999999999995px;background:#fff;"></div><div style="left:32.8px;top:687.7px;width:541.0px;height:14.899999999999977px;background:#efefef;border-top:1px solid #d4d4d4;border-bottom:1px solid #d4d4d4;box-sizing:border-box;"></div><div class="t" style="top:690px;font-size:10px;line-height:11px;color:#222;white-space:pre;left:36.8px;-webkit-text-stroke:0.2px #222;">Solution</div><div class="t" style="top:690px;font-size:10px;line-height:11px;color:#222;white-space:pre;left:282.5px;-webkit-text-stroke:0.2px #222;">χ²</div><div class="t" style="top:690px;font-size:10px;line-height:11px;color:#222;white-space:pre;left:371.5px;-webkit-text-stroke:0.2px #222;">AIC</div><div class="t" style="top:690px;font-size:10.46px;line-height:11px;color:#222;white-space:pre;left:460.5px;-webkit-text-stroke:0.2px #222;">Relative Probability</div><div style="left:32.8px;top:718.33px;width:541.0px;height:1px;background:#dcdcdc;"></div><svg style="left:38px;top:706.8px;" width="10" height="8" viewBox="0 0 10 8"><path d="M1.2,1 h7.6 l-3.8,6z" fill="#8c8c8c"/></svg><div class="t" style="top:704px;font-size:12.15px;line-height:14px;color:#111;white-space:pre;left:55.6px;">Solution 1 (2 conformers)</div><div class="t" style="top:704px;font-size:12.15px;line-height:14px;color:#111;white-space:pre;left:282.5px;">119.851</div><div class="t" style="top:704px;font-size:12.15px;line-height:14px;color:#111;white-space:pre;left:372.2px;">121.851</div><div class="t" style="top:704px;font-size:12.15px;line-height:14px;color:#111;white-space:pre;left:461.4px;">1.000</div><div style="left:32.8px;top:734.41px;width:541.0px;height:1px;background:#dcdcdc;"></div><div class="t" style="top:720px;font-size:12.15px;line-height:14px;color:#111;white-space:pre;left:73.4px;">Conformer 7:</div><div class="t" style="top:720px;font-size:12.15px;line-height:14px;color:#111;white-space:pre;left:217.98px;">79.4468%</div><div style="left:32.8px;top:750.47px;width:541.0px;height:1px;background:#dcdcdc;"></div><div class="t" style="top:736px;font-size:12.15px;line-height:14px;color:#111;white-space:pre;left:73.4px;">Conformer 12:</div><div class="t" style="top:736px;font-size:12.15px;line-height:14px;color:#111;white-space:pre;left:217.98px;">20.5532%</div><div style="left:32.8px;top:766.55px;width:541.0px;height:1px;background:#dcdcdc;"></div><svg style="left:38px;top:755.01px;" width="10" height="8" viewBox="0 0 10 8"><path d="M1.2,1 h7.6 l-3.8,6z" fill="#8c8c8c"/></svg><div class="t" style="top:752px;font-size:12.15px;line-height:14px;color:#111;white-space:pre;left:55.6px;">Solution 2 (2 conformers)</div><div class="t" style="top:752px;font-size:12.15px;line-height:14px;color:#111;white-space:pre;left:282.5px;">120.370</div><div class="t" style="top:752px;font-size:12.15px;line-height:14px;color:#111;white-space:pre;left:372.2px;">122.370</div><div class="t" style="top:752px;font-size:12.15px;line-height:14px;color:#111;white-space:pre;left:461.4px;">0.771</div><div style="left:32.8px;top:782.61px;width:541.0px;height:1px;background:#dcdcdc;"></div><div class="t" style="top:768px;font-size:12.15px;line-height:14px;color:#111;white-space:pre;left:73.4px;">Conformer 7:</div><div class="t" style="top:768px;font-size:12.15px;line-height:14px;color:#111;white-space:pre;left:217.98px;">75.3494%</div><div style="left:32.8px;top:798.69px;width:541.0px;height:1px;background:#dcdcdc;"></div><div class="t" style="top:784px;font-size:12.15px;line-height:14px;color:#111;white-space:pre;left:73.4px;">Conformer 13:</div><div class="t" style="top:784px;font-size:12.15px;line-height:14px;color:#111;white-space:pre;left:217.98px;">24.6506%</div><div style="left:32.8px;top:814.75px;width:541.0px;height:1px;background:#dcdcdc;"></div><svg style="left:38px;top:803.2199999999999px;" width="10" height="8" viewBox="0 0 10 8"><path d="M1.2,1 h7.6 l-3.8,6z" fill="#8c8c8c"/></svg><div class="t" style="top:800px;font-size:12.15px;line-height:14px;color:#111;white-space:pre;left:55.6px;">Solution 3 (3 conformers)</div><div class="t" style="top:800px;font-size:12.15px;line-height:14px;color:#111;white-space:pre;left:282.5px;">118.441</div><div class="t" style="top:800px;font-size:12.15px;line-height:14px;color:#111;white-space:pre;left:372.2px;">122.441</div><div class="t" style="top:800px;font-size:12.15px;line-height:14px;color:#111;white-space:pre;left:461.4px;">0.744</div><div style="left:32.8px;top:830.82px;width:541.0px;height:1px;background:#dcdcdc;"></div><div class="t" style="top:816px;font-size:12.15px;line-height:14px;color:#111;white-space:pre;left:73.4px;">Conformer 5:</div><div class="t" style="top:816px;font-size:12.15px;line-height:14px;color:#111;white-space:pre;left:217.98px;">26.5949%</div><div style="left:32.8px;top:846.89px;width:541.0px;height:1px;background:#dcdcdc;"></div><div class="t" style="top:833px;font-size:12.15px;line-height:14px;color:#111;white-space:pre;left:73.4px;">Conformer 7:</div><div class="t" style="top:833px;font-size:12.15px;line-height:14px;color:#111;white-space:pre;left:217.98px;">53.7287%</div><div style="left:32.8px;top:862.96px;width:541.0px;height:1px;background:#dcdcdc;"></div><div class="t" style="top:849px;font-size:12.15px;line-height:14px;color:#111;white-space:pre;left:73.4px;">Conformer 12:</div><div class="t" style="top:849px;font-size:12.15px;line-height:14px;color:#111;white-space:pre;left:217.98px;">19.6764%</div><div style="left:32.8px;top:879.04px;width:541.0px;height:1px;background:#dcdcdc;"></div><svg style="left:38px;top:867.5px;" width="10" height="8" viewBox="0 0 10 8"><path d="M1.2,1 h7.6 l-3.8,6z" fill="#8c8c8c"/></svg><div class="t" style="top:865px;font-size:12.15px;line-height:14px;color:#111;white-space:pre;left:55.6px;">Solution 4 (3 conformers)</div><div class="t" style="top:865px;font-size:12.15px;line-height:14px;color:#111;white-space:pre;left:282.5px;">118.681</div><div class="t" style="top:865px;font-size:12.15px;line-height:14px;color:#111;white-space:pre;left:372.2px;">122.681</div><div class="t" style="top:865px;font-size:12.15px;line-height:14px;color:#111;white-space:pre;left:461.4px;">0.660</div><div style="left:32.8px;top:895.1px;width:541.0px;height:1px;background:#dcdcdc;"></div><div class="t" style="top:881px;font-size:12.26px;line-height:14px;color:#111;white-space:pre;left:73.4px;">Conformer 1:14.0466%</div><div style="left:32.8px;top:911.18px;width:541.0px;height:1px;background:#dcdcdc;"></div><div class="t" style="top:897px;font-size:12.15px;line-height:14px;color:#111;white-space:pre;left:73.4px;">Conformer 7:</div><div class="t" style="top:897px;font-size:12.15px;line-height:14px;color:#111;white-space:pre;left:217.98px;">67.1827%</div><div style="left:32.8px;top:927.24px;width:541.0px;height:1px;background:#dcdcdc;"></div><div class="t" style="top:913px;font-size:12.15px;line-height:14px;color:#111;white-space:pre;left:73.4px;clip-path:inset(0 0 8.1px 0);">Conformer 12:</div><div class="t" style="top:913px;font-size:12.15px;line-height:14px;color:#111;white-space:pre;left:217.98px;clip-path:inset(0 0 8.1px 0);">18.7707%</div><div style="left:277.2px;top:687.7px;width:1px;height:231.79999999999995px;background:#d2d2d2;"></div><div style="left:367.5px;top:687.7px;width:1px;height:231.79999999999995px;background:#d2d2d2;"></div><div style="left:456.8px;top:687.7px;width:1px;height:231.79999999999995px;background:#d2d2d2;"></div><div style="left:31.799999999999997px;top:687.7px;width:1px;height:231.79999999999995px;background:#d8d8d8;"></div><div style="left:573.8px;top:687.7px;width:1px;height:231.79999999999995px;background:#d8d8d8;"></div><div style="left:32.8px;top:919.5px;width:541.0px;height:1px;background:#d0d0d0;"></div><div style="left:577px;top:702.6px;width:13.299999999999955px;height:216.89999999999998px;background:#fafafa;border:1px solid #dcdcdc;box-sizing:border-box;"></div><div style="left:578px;top:851.9px;width:11.299999999999955px;height:51.5px;background:#c2c2c2;"></div><svg style="left:577px;top:702.6px;background:#f4f4f4;box-shadow:inset 0 0 0 1px #dcdcdc;" width="13.299999999999955" height="13.299999999999955" viewBox="0 0 13.299999999999955 13.299999999999955"><path d="M2.6599999999999913,9.04399999999997 h7.979999999999972 l-3.989999999999986,-5.585999999999981z" fill="#7c7c7c"/></svg><svg style="left:577px;top:906.2px;background:#f4f4f4;box-shadow:inset 0 0 0 1px #dcdcdc;" width="13.299999999999955" height="13.299999999999955" viewBox="0 0 13.299999999999955 13.299999999999955"><path d="M2.6599999999999913,4.255999999999985 h7.979999999999972 l-3.989999999999986,5.585999999999981z" fill="#7c7c7c"/></svg><svg style="left:299.29999999999995px;top:920.5px;" width="8" height="5" viewBox="0 0 8 5"><path d="M1,1 h6 l-3,3z" fill="#bdbdbd"/></svg><div style="left:32.8px;top:926px;width:541.0px;height:174px;background:#fff;"></div><div style="left:32.8px;top:926px;width:541.0px;height:12.799999999999955px;background:#efefef;border-top:1px solid #d4d4d4;border-bottom:1px solid #d4d4d4;box-sizing:border-box;"></div><div class="t" style="top:927px;font-size:10px;line-height:11px;color:#222;white-space:pre;left:36.8px;-webkit-text-stroke:0.2px #222;">Atoms</div><div class="t" style="top:927px;font-size:10px;line-height:11px;color:#222;white-space:pre;left:163px;-webkit-text-stroke:0.2px #222;">Experimental</div><div class="t" style="top:927px;font-size:10.53px;line-height:12px;color:#222;white-space:pre;left:252.3px;-webkit-text-stroke:0.2px #222;">Calculated Average</div><div style="left:32.8px;top:955.24px;width:541.0px;height:1px;background:#dcdcdc;"></div><svg style="left:38px;top:943.7px;" width="10" height="8" viewBox="0 0 10 8"><path d="M1.2,1 h7.6 l-3.8,6z" fill="#8c8c8c"/></svg><div class="t" style="top:941px;font-size:11.88px;line-height:14px;color:#111;white-space:pre;left:55.6px;">NOE distances (Å)</div><div style="left:32.8px;top:971.31px;width:541.0px;height:1px;background:#dcdcdc;"></div><div class="t" style="top:957px;font-size:12.15px;line-height:14px;color:#111;white-space:pre;left:73.4px;">25,41</div><div class="t" style="top:957px;font-size:12.15px;line-height:14px;color:#111;white-space:pre;left:164px;">2.976</div><div class="t" style="top:957px;font-size:12.15px;line-height:14px;color:#111;white-space:pre;left:253.5px;">5.306</div><div style="left:32.8px;top:987.38px;width:541.0px;height:1px;background:#dcdcdc;"></div><div class="t" style="top:973px;font-size:12.15px;line-height:14px;color:#111;white-space:pre;left:73.4px;">25,29</div><div class="t" style="top:973px;font-size:12.15px;line-height:14px;color:#111;white-space:pre;left:164px;">2.617</div><div class="t" style="top:973px;font-size:12.15px;line-height:14px;color:#111;white-space:pre;left:253.5px;">2.522</div><div style="left:32.8px;top:1003.45px;width:541.0px;height:1px;background:#dcdcdc;"></div><div class="t" style="top:989px;font-size:12.15px;line-height:14px;color:#111;white-space:pre;left:73.4px;">26,41</div><div class="t" style="top:989px;font-size:12.15px;line-height:14px;color:#111;white-space:pre;left:164px;">2.982</div><div class="t" style="top:989px;font-size:12.15px;line-height:14px;color:#111;white-space:pre;left:253.5px;">2.910</div><div style="left:32.8px;top:1019.52px;width:541.0px;height:1px;background:#dcdcdc;"></div><div class="t" style="top:1005px;font-size:12.15px;line-height:14px;color:#111;white-space:pre;left:73.4px;">26,42</div><div class="t" style="top:1005px;font-size:12.15px;line-height:14px;color:#111;white-space:pre;left:164px;">2.648</div><div class="t" style="top:1005px;font-size:12.15px;line-height:14px;color:#111;white-space:pre;left:253.5px;">2.543</div><div style="left:32.8px;top:1035.58px;width:541.0px;height:1px;background:#dcdcdc;"></div><div class="t" style="top:1021px;font-size:12.15px;line-height:14px;color:#111;white-space:pre;left:73.4px;">26,36</div><div class="t" style="top:1021px;font-size:12.15px;line-height:14px;color:#111;white-space:pre;left:164px;">2.823</div><div class="t" style="top:1021px;font-size:12.15px;line-height:14px;color:#111;white-space:pre;left:253.5px;">2.595</div><div style="left:32.8px;top:1051.66px;width:541.0px;height:1px;background:#dcdcdc;"></div><div class="t" style="top:1037px;font-size:12.15px;line-height:14px;color:#111;white-space:pre;left:73.4px;">26,35</div><div class="t" style="top:1037px;font-size:12.15px;line-height:14px;color:#111;white-space:pre;left:164px;">1.991</div><div class="t" style="top:1037px;font-size:12.15px;line-height:14px;color:#111;white-space:pre;left:253.5px;">4.181</div><div style="left:32.8px;top:1067.72px;width:541.0px;height:1px;background:#dcdcdc;"></div><div class="t" style="top:1053px;font-size:12.15px;line-height:14px;color:#111;white-space:pre;left:73.4px;">26,32</div><div class="t" style="top:1053px;font-size:12.15px;line-height:14px;color:#111;white-space:pre;left:164px;">1.991</div><div class="t" style="top:1053px;font-size:12.15px;line-height:14px;color:#111;white-space:pre;left:253.5px;">3.511</div><div style="left:32.8px;top:1083.79px;width:541.0px;height:1px;background:#dcdcdc;"></div><div class="t" style="top:1069px;font-size:12.15px;line-height:14px;color:#111;white-space:pre;left:73.4px;">26,30</div><div class="t" style="top:1069px;font-size:12.15px;line-height:14px;color:#111;white-space:pre;left:164px;">2.682</div><div class="t" style="top:1069px;font-size:12.15px;line-height:14px;color:#111;white-space:pre;left:253.5px;">4.690</div><div style="left:32.8px;top:1099.86px;width:541.0px;height:1px;background:#dcdcdc;"></div><div class="t" style="top:1086px;font-size:12.15px;line-height:14px;color:#111;white-space:pre;left:73.4px;clip-path:inset(0 0 0.2px 0);">26,27</div><div class="t" style="top:1086px;font-size:12.15px;line-height:14px;color:#111;white-space:pre;left:164px;clip-path:inset(0 0 0.2px 0);">2.682</div><div class="t" style="top:1086px;font-size:12.15px;line-height:14px;color:#111;white-space:pre;left:253.5px;clip-path:inset(0 0 0.2px 0);">2.264</div><div style="left:158.6px;top:926px;width:1px;height:174px;background:#d2d2d2;"></div><div style="left:247.6px;top:926px;width:1px;height:174px;background:#d2d2d2;"></div><div style="left:31.799999999999997px;top:926px;width:1px;height:174px;background:#d8d8d8;"></div><div style="left:573.8px;top:926px;width:1px;height:174px;background:#d8d8d8;"></div><div style="left:577px;top:938.8px;width:13.299999999999955px;height:161.20000000000005px;background:#fafafa;border:1px solid #dcdcdc;box-sizing:border-box;"></div><div style="left:578px;top:1014px;width:11.299999999999955px;height:86px;background:#c2c2c2;"></div><svg style="left:577px;top:938.8px;background:#f4f4f4;box-shadow:inset 0 0 0 1px #dcdcdc;" width="13.299999999999955" height="13.299999999999955" viewBox="0 0 13.299999999999955 13.299999999999955"><path d="M2.6599999999999913,9.04399999999997 h7.979999999999972 l-3.989999999999986,-5.585999999999981z" fill="#7c7c7c"/></svg><div style="left:853px;top:0px;width:472px;height:440px;background:#ececec;"></div><div style="left:853px;top:0px;width:472px;height:5px;background:linear-gradient(#dcdcdc,#f4f4f4 50%,#d4d4d4);"></div><div style="left:853px;top:5px;width:472px;height:18px;background:linear-gradient(#e9e9e9,#d3d3d3);border-bottom:1px solid #c2c2c2;box-sizing:border-box;"></div><div style="left:852px;top:0px;width:2px;height:437px;background:#111;"></div><div style="left:860.7px;top:7.2px;width:12.6px;height:12.6px;background:#f6534f;border-radius:50%;"></div><div style="left:881px;top:7.5px;width:12px;height:12px;background:#d4d4d4;border-radius:50%;"></div><div style="left:902px;top:7.5px;width:12px;height:12px;background:#d4d4d4;border-radius:50%;"></div><svg style="left:1038px;top:5.5px;" width="16" height="16" viewBox="0 0 16 16"><g transform="translate(8,8) scale(1.0)"><circle cx="0" cy="0" r="6" fill="#d6101f"/><circle cx="0.6" cy="0" r="2.7" fill="#fff"/><path d="M-2.5,1 L-0.5,3.5 L1,1z" fill="#d6101f"/></g></svg><div class="t" style="top:6px;font-size:13.45px;line-height:15px;color:#3c3c3c;white-space:pre;left:1058px;">Assignments</div><svg style="left:882.2px;top:35.7px;" width="27.599999999999998" height="27.599999999999998" viewBox="0 0 27.599999999999998 27.599999999999998"><g transform="translate(13.799999999999999,13.799999999999999) scale(1.15)"><rect x="-7" y="-7.5" width="14" height="15" rx="1" fill="#f6f9fe" stroke="#4a80cc" stroke-width="1.2"/><rect x="-4.5" y="-5" width="9" height="10" fill="none" stroke="#5a86c8" stroke-width="0.9"/><path d="M-2.5,-3h5M-2.5,-1h5M-2.5,1h5M-2.5,3h5" stroke="#8a8f99" stroke-width="0.9"/><path d="M-7,6 h14" stroke="#3f78c9" stroke-width="1.6"/></g></svg><div class="t" style="top:66px;font-size:12.35px;line-height:14px;color:#000;white-space:pre;left:878.32px;-webkit-text-stroke:0.35px #000;">Report</div><svg style="left:940.2px;top:35.7px;" width="27.599999999999998" height="27.599999999999998" viewBox="0 0 27.599999999999998 27.599999999999998"><g transform="translate(13.799999999999999,13.799999999999999) scale(1.15)"><rect x="-7.5" y="-7.5" width="9" height="11" rx="1" fill="#f2f6fc" stroke="#7c9fd2" stroke-width="1"/><rect x="-3" y="-4" width="10" height="12" rx="1" fill="#eef3fb" stroke="#5b8ad0" stroke-width="1.1"/><path d="M-1,-1h6M-1,1.2h6M-1,3.4h6M-1,5.6h6" stroke="#7aa0d8" stroke-width="0.9"/></g></svg><div class="t" style="top:66px;font-size:12.35px;line-height:14px;color:#000;white-space:pre;left:939.49px;-webkit-text-stroke:0.35px #000;">Copy</div><div style="left:988px;top:40px;width:1px;height:47px;background:#d2d2d2;"></div><div style="left:989px;top:40px;width:1px;height:47px;background:#fafafa;"></div><svg style="left:1009.0px;top:36.7px;" width="27.599999999999998" height="27.599999999999998" viewBox="0 0 27.599999999999998 27.599999999999998"><g transform="translate(13.799999999999999,13.799999999999999) scale(1.15)"><path d="M-4.6,-4.6 L4.6,4.6 M4.6,-4.6 L-4.6,4.6" stroke="#858585" stroke-width="3.8" stroke-linecap="round"/></g></svg><div class="t" style="top:66px;font-size:12.35px;line-height:14px;color:#000;white-space:pre;left:1005.0px;-webkit-text-stroke:0.35px #000;">Delete</div><div style="left:1057px;top:40px;width:1px;height:47px;background:#d2d2d2;"></div><div style="left:1058px;top:40px;width:1px;height:47px;background:#fafafa;"></div><svg style="left:1082.7px;top:35.7px;" width="27.599999999999998" height="27.599999999999998" viewBox="0 0 27.599999999999998 27.599999999999998"><g transform="translate(13.799999999999999,13.799999999999999) scale(1.15)"><path d="M-6,-6 v10 h5" stroke="#e57a90" stroke-width="1.1" fill="none"/><rect x="-8" y="-8" width="4" height="4" fill="#fff" stroke="#e0405a" stroke-width="1"/><rect x="-3" y="2" width="4.5" height="4.5" fill="#fff" stroke="#e0405a" stroke-width="1"/><path d="M-1,-3 h4 M1,-5 v4" stroke="#e0405a" stroke-width="1"/><path d="M5,-9 l1.4,3 3,1.4 -3,1.4 -1.4,3 -1.4,-3 -3,-1.4 3,-1.4z" fill="#2020e0"/></g></svg><div class="t" style="top:66px;font-size:12.35px;line-height:14px;color:#000;white-space:pre;left:1075.66px;-webkit-text-stroke:0.35px #000;">Expand</div><svg style="left:1150.2px;top:35.7px;" width="27.599999999999998" height="27.599999999999998" viewBox="0 0 27.599999999999998 27.599999999999998"><g transform="translate(13.799999999999999,13.799999999999999) scale(1.15)"><rect x="-9" y="-7" width="5" height="2.2" fill="#f3b0c0"/><rect x="3" y="-7" width="6" height="2.2" fill="#2020e0"/><path d="M-3,-6 h4" stroke="#ddd" stroke-width="1"/></g></svg><div class="t" style="top:66px;font-size:12.35px;line-height:14px;color:#000;white-space:pre;left:1140.77px;-webkit-text-stroke:0.35px #000;">Collapse</div><svg style="left:1211.7px;top:35.7px;" width="27.599999999999998" height="27.599999999999998" viewBox="0 0 27.599999999999998 27.599999999999998"><g transform="translate(13.799999999999999,13.799999999999999) scale(1.15)"><path d="M-6,-7 q-1,6 3,7 q5,0 4,6 q-4,3 -8,0 q-2,-4 3,-6" fill="none" stroke="#3a3fb0" stroke-width="1.3"/><circle cx="-5" cy="-6" r="1.8" fill="none" stroke="#e0405a" stroke-width="1"/><circle cx="4.5" cy="-4" r="4.2" fill="#fff" stroke="#e8102a" stroke-width="1.8"/><path d="M1.6,-6.8 L7.4,-1.2" stroke="#e8102a" stroke-width="1.8"/></g></svg><div class="t" style="top:66px;font-size:12.35px;line-height:14px;color:#000;white-space:pre;left:1213.15px;-webkit-text-stroke:0.35px #000;">Hide</div><div style="left:1253px;top:40px;width:1px;height:47px;background:#d2d2d2;"></div><div style="left:1254px;top:40px;width:1px;height:47px;background:#fafafa;"></div><svg style="left:1288px;top:54px;" width="16" height="14" viewBox="0 0 16 14"><path d="M2,2 l5,5 -5,5 M8,2 l5,5 -5,5" stroke="#4a4a4a" stroke-width="1.8" fill="none"/></svg><svg style="left:1085px;top:88px;" width="8" height="6" viewBox="0 0 8 6"><path d="M1,1 h6 l-3,4z" fill="#b0b0b0"/></svg><div style="left:868px;top:96px;width:421px;height:344px;background:#fff;"></div><div style="left:868px;top:96px;width:421px;height:18px;background:#f0f0f0;border-top:1px solid #d0d0d0;border-bottom:1px solid #cfcfcf;box-sizing:border-box;"></div><div class="t" style="top:98px;font-size:15.85px;line-height:17px;color:#000;white-space:pre;left:873.4px;">Atom</div><div class="t" style="top:98px;font-size:15.79px;line-height:17px;color:#000;white-space:pre;left:955.6px;">δ (ppm)</div><div class="t" style="top:99px;font-size:14.57px;line-height:16px;color:#000;white-space:pre;left:1025px;">NOESY</div><div style="left:868px;top:116.33px;width:421px;height:18.54px;background:#f5f5f5;"></div><div style="left:868px;top:134.37px;width:421px;height:1px;background:#d9d9d9;"></div><div class="t" style="top:117px;font-size:15.9px;line-height:17px;color:#000;white-space:pre;left:898.12px;">24</div><div class="t" style="top:117px;font-size:15.9px;line-height:17px;color:#000;white-space:pre;left:925px;">C</div><div style="left:868px;top:152.91px;width:421px;height:1px;background:#d9d9d9;"></div><div class="t" style="top:136px;font-size:15.9px;line-height:17px;color:#000;white-space:pre;left:898.12px;">25</div><div class="t" style="top:136px;font-size:15.9px;line-height:17px;color:#000;white-space:pre;left:925px;">H</div><div class="t" style="top:136px;font-size:15.9px;line-height:17px;color:#000;white-space:pre;left:957px;">1.84</div><div style="left:1032.5px;top:137.64px;width:13px;height:13px;background:#fff;border:1px solid #bdbdbd;box-sizing:border-box;"></div><svg style="left:1033.5px;top:138.64px;" width="11" height="11" viewBox="0 0 11 11"><path d="M2.2,5.6 l2.6,3 l4,-6.4" stroke="#6a6a6a" stroke-width="1.3" fill="none"/></svg><div class="t" style="top:136px;font-size:15.9px;line-height:17px;color:#000;white-space:pre;left:1053.7px;">29</div><div style="left:868px;top:153.41px;width:421px;height:18.54px;background:#f5f5f5;"></div><div style="left:868px;top:171.45px;width:421px;height:1px;background:#d9d9d9;"></div><div class="t" style="top:154px;font-size:15.9px;line-height:17px;color:#000;white-space:pre;left:898.12px;">26</div><div class="t" style="top:154px;font-size:15.9px;line-height:17px;color:#000;white-space:pre;left:925px;">H</div><div class="t" style="top:154px;font-size:15.9px;line-height:17px;color:#000;white-space:pre;left:957px;">3.17</div><div style="left:1032.5px;top:156.18px;width:13px;height:13px;background:#fff;border:1px solid #bdbdbd;box-sizing:border-box;"></div><svg style="left:1033.5px;top:157.18px;" width="11" height="11" viewBox="0 0 11 11"><path d="M2.2,5.6 l2.6,3 l4,-6.4" stroke="#6a6a6a" stroke-width="1.3" fill="none"/></svg><div class="t" style="top:154px;font-size:15.9px;line-height:17px;color:#000;white-space:pre;left:1053.7px;">27, 29, 32, 33, 42</div><div style="left:868px;top:189.99px;width:421px;height:1px;background:#d9d9d9;"></div><div class="t" style="top:173px;font-size:15.9px;line-height:17px;color:#000;white-space:pre;left:898.12px;">27</div><div class="t" style="top:173px;font-size:15.9px;line-height:17px;color:#000;white-space:pre;left:925px;">H</div><div class="t" style="top:173px;font-size:15.9px;line-height:17px;color:#000;white-space:pre;left:957px;">1.54</div><div style="left:1032.5px;top:174.72px;width:13px;height:13px;background:#fff;border:1px solid #bdbdbd;box-sizing:border-box;"></div><svg style="left:1033.5px;top:175.72px;" width="11" height="11" viewBox="0 0 11 11"><path d="M2.2,5.6 l2.6,3 l4,-6.4" stroke="#6a6a6a" stroke-width="1.3" fill="none"/></svg><div class="t" style="top:173px;font-size:15.9px;line-height:17px;color:#000;white-space:pre;left:1053.7px;">26</div><div style="left:868px;top:190.49px;width:421px;height:18.54px;background:#f5f5f5;"></div><div style="left:868px;top:208.53px;width:421px;height:1px;background:#d9d9d9;"></div><div class="t" style="top:191px;font-size:15.9px;line-height:17px;color:#000;white-space:pre;left:898.12px;">28</div><div class="t" style="top:191px;font-size:15.9px;line-height:17px;color:#000;white-space:pre;left:925px;">H</div><div class="t" style="top:191px;font-size:15.9px;line-height:17px;color:#000;white-space:pre;left:957px;">1.77</div><div style="left:868px;top:227.07px;width:421px;height:1px;background:#d9d9d9;"></div><div class="t" style="top:210px;font-size:15.9px;line-height:17px;color:#000;white-space:pre;left:898.12px;">29</div><div class="t" style="top:210px;font-size:15.9px;line-height:17px;color:#000;white-space:pre;left:925px;">H</div><div class="t" style="top:210px;font-size:15.9px;line-height:17px;color:#000;white-space:pre;left:957px;">2.30</div><div style="left:1032.5px;top:211.8px;width:13px;height:13px;background:#fff;border:1px solid #bdbdbd;box-sizing:border-box;"></div><svg style="left:1033.5px;top:212.8px;" width="11" height="11" viewBox="0 0 11 11"><path d="M2.2,5.6 l2.6,3 l4,-6.4" stroke="#6a6a6a" stroke-width="1.3" fill="none"/></svg><div class="t" style="top:210px;font-size:15.9px;line-height:17px;color:#000;white-space:pre;left:1053.7px;">25, 26, 30</div><div style="left:868px;top:227.57px;width:421px;height:18.54px;background:#f5f5f5;"></div><div style="left:868px;top:245.61px;width:421px;height:1px;background:#d9d9d9;"></div><div class="t" style="top:228px;font-size:15.9px;line-height:17px;color:#000;white-space:pre;left:898.12px;">30</div><div class="t" style="top:228px;font-size:15.9px;line-height:17px;color:#000;white-space:pre;left:925px;">H</div><div class="t" style="top:228px;font-size:15.9px;line-height:17px;color:#000;white-space:pre;left:957px;">1.54</div><div style="left:1032.5px;top:230.34px;width:13px;height:13px;background:#fff;border:1px solid #bdbdbd;box-sizing:border-box;"></div><svg style="left:1033.5px;top:231.34px;" width="11" height="11" viewBox="0 0 11 11"><path d="M2.2,5.6 l2.6,3 l4,-6.4" stroke="#6a6a6a" stroke-width="1.3" fill="none"/></svg><div class="t" style="top:228px;font-size:15.9px;line-height:17px;color:#000;white-space:pre;left:1053.7px;">29</div><div style="left:868px;top:264.15px;width:421px;height:1px;background:#d9d9d9;"></div><div class="t" style="top:247px;font-size:15.9px;line-height:17px;color:#000;white-space:pre;left:898.12px;">31</div><div class="t" style="top:247px;font-size:15.9px;line-height:17px;color:#000;white-space:pre;left:925px;">H</div><div class="t" style="top:247px;font-size:15.9px;line-height:17px;color:#000;white-space:pre;left:957px;">1.77</div><div style="left:868px;top:264.65px;width:421px;height:18.54px;background:#f5f5f5;"></div><div style="left:868px;top:282.69px;width:421px;height:1px;background:#d9d9d9;"></div><div class="t" style="top:265px;font-size:15.9px;line-height:17px;color:#000;white-space:pre;left:898.12px;">32</div><div class="t" style="top:265px;font-size:15.9px;line-height:17px;color:#000;white-space:pre;left:925px;">H</div><div class="t" style="top:265px;font-size:15.9px;line-height:17px;color:#000;white-space:pre;left:957px;">2.68</div><div style="left:1032.5px;top:267.42px;width:13px;height:13px;background:#fff;border:1px solid #bdbdbd;box-sizing:border-box;"></div><svg style="left:1033.5px;top:268.42px;" width="11" height="11" viewBox="0 0 11 11"><path d="M2.2,5.6 l2.6,3 l4,-6.4" stroke="#6a6a6a" stroke-width="1.3" fill="none"/></svg><div class="t" style="top:265px;font-size:15.9px;line-height:17px;color:#000;white-space:pre;left:1053.7px;">26</div><div style="left:868px;top:301.23px;width:421px;height:1px;background:#d9d9d9;"></div><div class="t" style="top:284px;font-size:15.9px;line-height:17px;color:#000;white-space:pre;left:898.12px;">33</div><div class="t" style="top:284px;font-size:15.9px;line-height:17px;color:#000;white-space:pre;left:925px;">H</div><div class="t" style="top:284px;font-size:15.9px;line-height:17px;color:#000;white-space:pre;left:957px;">3.11</div><div style="left:1032.5px;top:285.96px;width:13px;height:13px;background:#fff;border:1px solid #bdbdbd;box-sizing:border-box;"></div><svg style="left:1033.5px;top:286.96px;" width="11" height="11" viewBox="0 0 11 11"><path d="M2.2,5.6 l2.6,3 l4,-6.4" stroke="#6a6a6a" stroke-width="1.3" fill="none"/></svg><div class="t" style="top:284px;font-size:15.9px;line-height:17px;color:#000;white-space:pre;left:1053.7px;">26</div><div style="left:868px;top:301.73px;width:421px;height:18.54px;background:#f5f5f5;"></div><div style="left:868px;top:319.77px;width:421px;height:1px;background:#d9d9d9;"></div><div class="t" style="top:302px;font-size:15.9px;line-height:17px;color:#000;white-space:pre;left:898.12px;">34</div><div class="t" style="top:302px;font-size:15.9px;line-height:17px;color:#000;white-space:pre;left:925px;">H</div><div class="t" style="top:302px;font-size:15.9px;line-height:17px;color:#000;white-space:pre;left:957px;">3.50</div><div style="left:1032.5px;top:304.5px;width:13px;height:13px;background:#fff;border:1px solid #bdbdbd;box-sizing:border-box;"></div><svg style="left:1033.5px;top:305.5px;" width="11" height="11" viewBox="0 0 11 11"><path d="M2.2,5.6 l2.6,3 l4,-6.4" stroke="#6a6a6a" stroke-width="1.3" fill="none"/></svg><div class="t" style="top:302px;font-size:15.9px;line-height:17px;color:#000;white-space:pre;left:1053.7px;">35</div><div style="left:868px;top:338.31px;width:421px;height:1px;background:#d9d9d9;"></div><div class="t" style="top:321px;font-size:15.9px;line-height:17px;color:#000;white-space:pre;left:898.12px;">35</div><div class="t" style="top:321px;font-size:15.9px;line-height:17px;color:#000;white-space:pre;left:925px;">H</div><div class="t" style="top:321px;font-size:15.9px;line-height:17px;color:#000;white-space:pre;left:957px;">2.68</div><div style="left:1032.5px;top:323.04px;width:13px;height:13px;background:#fff;border:1px solid #bdbdbd;box-sizing:border-box;"></div><svg style="left:1033.5px;top:324.04px;" width="11" height="11" viewBox="0 0 11 11"><path d="M2.2,5.6 l2.6,3 l4,-6.4" stroke="#6a6a6a" stroke-width="1.3" fill="none"/></svg><div class="t" style="top:321px;font-size:15.9px;line-height:17px;color:#000;white-space:pre;left:1053.7px;">34</div><div style="left:868px;top:338.81px;width:421px;height:18.54px;background:#f5f5f5;"></div><div style="left:868px;top:356.85px;width:421px;height:1px;background:#d9d9d9;"></div><div class="t" style="top:340px;font-size:15.9px;line-height:17px;color:#000;white-space:pre;left:898.12px;">36</div><div class="t" style="top:340px;font-size:15.9px;line-height:17px;color:#000;white-space:pre;left:925px;">H</div><div class="t" style="top:340px;font-size:15.9px;line-height:17px;color:#000;white-space:pre;left:957px;">5.58</div><div style="left:1032.5px;top:341.58px;width:13px;height:13px;background:#fff;border:1px solid #bdbdbd;box-sizing:border-box;"></div><svg style="left:1033.5px;top:342.58px;" width="11" height="11" viewBox="0 0 11 11"><path d="M2.2,5.6 l2.6,3 l4,-6.4" stroke="#6a6a6a" stroke-width="1.3" fill="none"/></svg><div class="t" style="top:340px;font-size:15.9px;line-height:17px;color:#000;white-space:pre;left:1053.7px;">26, 27, 28, 34, 35, 41, 42</div><div style="left:868px;top:375.39px;width:421px;height:1px;background:#d9d9d9;"></div><div class="t" style="top:358px;font-size:15.9px;line-height:17px;color:#000;white-space:pre;left:898.12px;">37</div><div class="t" style="top:358px;font-size:15.9px;line-height:17px;color:#000;white-space:pre;left:925px;">H</div><div class="t" style="top:358px;font-size:15.9px;line-height:17px;color:#000;white-space:pre;left:957px;">5.75</div><div style="left:868px;top:375.89px;width:421px;height:18.54px;background:#f5f5f5;"></div><div style="left:868px;top:393.93px;width:421px;height:1px;background:#d9d9d9;"></div><div class="t" style="top:377px;font-size:15.9px;line-height:17px;color:#000;white-space:pre;left:898.12px;">38</div><div class="t" style="top:377px;font-size:15.9px;line-height:17px;color:#000;white-space:pre;left:925px;">H</div><div class="t" style="top:377px;font-size:15.9px;line-height:17px;color:#000;white-space:pre;left:957px;">4.05</div><div style="left:868px;top:412.47px;width:421px;height:1px;background:#d9d9d9;"></div><div class="t" style="top:395px;font-size:15.9px;line-height:17px;color:#000;white-space:pre;left:898.12px;">39</div><div class="t" style="top:395px;font-size:15.9px;line-height:17px;color:#000;white-space:pre;left:925px;">H</div><div class="t" style="top:395px;font-size:15.9px;line-height:17px;color:#000;white-space:pre;left:957px;">4.98</div><div style="left:868px;top:412.97px;width:421px;height:18.54px;background:#f5f5f5;"></div><div style="left:868px;top:431.01px;width:421px;height:1px;background:#d9d9d9;"></div><div class="t" style="top:414px;font-size:15.9px;line-height:17px;color:#000;white-space:pre;left:898.12px;">40</div><div class="t" style="top:414px;font-size:15.9px;line-height:17px;color:#000;white-space:pre;left:925px;">H</div><div class="t" style="top:414px;font-size:15.9px;line-height:17px;color:#000;white-space:pre;left:957px;">4.94</div><div style="left:868px;top:449.55px;width:421px;height:1px;background:#d9d9d9;"></div><div class="t" style="top:432px;font-size:15.9px;line-height:17px;color:#000;white-space:pre;left:898.12px;">41</div><div class="t" style="top:432px;font-size:15.9px;line-height:17px;color:#000;white-space:pre;left:925px;">H</div><div class="t" style="top:432px;font-size:15.9px;line-height:17px;color:#000;white-space:pre;left:957px;">7.51</div><div style="left:1032.5px;top:434.28px;width:13px;height:13px;background:#fff;border:1px solid #bdbdbd;box-sizing:border-box;"></div><svg style="left:1033.5px;top:435.28px;" width="11" height="11" viewBox="0 0 11 11"><path d="M2.2,5.6 l2.6,3 l4,-6.4" stroke="#6a6a6a" stroke-width="1.3" fill="none"/></svg><div class="t" style="top:432px;font-size:15.9px;line-height:17px;color:#000;white-space:pre;left:1053.7px;">26, 27, 36, 42</div><div style="left:949px;top:96px;width:1px;height:344px;background:#d0d0d0;"></div><div style="left:1019px;top:96px;width:1px;height:344px;background:#d0d0d0;"></div><div style="left:867px;top:96px;width:1px;height:344px;background:#d6d6d6;"></div><div style="left:1289px;top:96px;width:1px;height:344px;background:#d6d6d6;"></div><div style="left:1292px;top:96px;width:16px;height:344px;background:#fafafa;border-left:1px solid #e0e0e0;border-right:1px solid #e0e0e0;box-sizing:border-box;"></div><div style="left:1292px;top:96px;width:16px;height:16px;background:#f6f6f6;border:1px solid #dedede;box-sizing:border-box;"></div><svg style="left:1295px;top:100px;" width="10" height="8" viewBox="0 0 10 8"><path d="M1,7 h8 l-4,-5z" fill="#8a8a8a"/></svg><div style="left:1294px;top:112px;width:13px;height:221px;background:#c1c1c1;"></div><div style="left:1323px;top:0px;width:2px;height:437px;background:#0a0a0a;"></div><div style="left:1325px;top:0px;width:661px;height:440px;background:#fff;"></div><div style="left:1325px;top:0px;width:660px;height:6px;background:linear-gradient(#d0d0d0,#f6f6f6 50%,#cfcfcf);"></div><div style="left:1325px;top:6px;width:661px;height:47px;background:linear-gradient(#e4e4e4,#d6d6d6 40%,#d2d2d2);border-bottom:1.5px solid #a9a9a9;box-sizing:border-box;"></div><div style="left:1342.4px;top:16.7px;width:26px;height:26px;background:#f6534f;border-radius:50%;box-shadow:inset 0 0 0 1px #e0443e;"></div><div style="left:1386px;top:16.7px;width:26px;height:26px;background:#dadada;border-radius:50%;box-shadow:inset 0 0 0 1px #c8c8c8;"></div><div style="left:1429.8px;top:16.7px;width:26px;height:26px;background:#dadada;border-radius:50%;box-shadow:inset 0 0 0 1px #c8c8c8;"></div><svg style="left:1549px;top:13px;" width="34" height="34" viewBox="0 0 34 34"><path d="M17,1.5 L30.5,9.2 V24.8 L17,32.5 L3.5,24.8 V9.2z" fill="#d6101f"/><path d="M11.5,21 V12 h2.6 l3,4.2 3,-4.2 h2.4 V17 l-3,1 V15.4 l-2.4,3.4 -2.6,-3.4 V23z" fill="#fff"/></svg><div class="t" style="top:15px;font-size:28.5px;line-height:32px;color:#3a3a3a;white-space:pre;left:1594px;-webkit-text-stroke:0.6px #3a3a3a;">NOE options</div><div style="left:1369.3px;top:107.0px;width:25.0px;height:25.0px;background:#fff;border-radius:50%;box-shadow:inset 0 0 0 1.5px #b9b9b9, inset 0 2px 3px rgba(0,0,0,.08);"></div><div class="t" style="top:103px;font-size:29.4px;line-height:33px;color:#1c1c1c;white-space:pre;left:1408.6px;-webkit-text-stroke:0.75px #1c1c1c;">Peaks Integration Method</div><div style="left:1369.3px;top:163.5px;width:25.0px;height:25.0px;background:#f4f4f4;border-radius:50%;box-shadow:inset 0 0 0 1.5px #b0b0b0;"></div><div style="left:1375.8px;top:170px;width:12px;height:12px;background:#8a8a8a;border-radius:50%;"></div><div class="t" style="top:160px;font-size:29.72px;line-height:33px;color:#1c1c1c;white-space:pre;left:1408.6px;-webkit-text-stroke:0.75px #1c1c1c;">Volumes Integration Method</div><div class="t" style="top:212px;font-size:29.09px;line-height:32px;color:#4a4a4a;white-space:pre;left:1392px;-webkit-text-stroke:0.55px #4a4a4a;">Reference Distance</div><div style="left:1368.5px;top:245px;width:572px;height:173.5px;background:#fff;border:2px solid #cecece;box-sizing:border-box;"></div><div class="t" style="top:287px;font-size:28.42px;line-height:32px;color:#1c1c1c;white-space:pre;left:1397.5px;-webkit-text-stroke:0.75px #1c1c1c;">From:</div><div style="left:1486px;top:272.5px;width:178.5px;height:55.5px;background:#fff;border:1.5px solid #d0d0d0;border-bottom-color:#b4b4b4;box-sizing:border-box;"></div><div class="t" style="top:283px;font-size:28.69px;line-height:32px;color:#1c1c1c;white-space:pre;left:1510.8px;-webkit-text-stroke:0.75px #1c1c1c;">25 H</div><svg style="left:1641px;top:297px;" width="16" height="12" viewBox="0 0 16 12"><path d="M1.5,2 h13 l-6.5,8z" fill="#767676"/></svg><div class="t" style="top:286px;font-size:29.99px;line-height:33px;color:#1c1c1c;white-space:pre;left:1680.6px;-webkit-text-stroke:0.75px #1c1c1c;">To:</div><div style="left:1736px;top:272.5px;width:178.5px;height:55.5px;background:#fff;border:1.5px solid #d0d0d0;border-bottom-color:#b4b4b4;box-sizing:border-box;"></div><div class="t" style="top:282px;font-size:29.35px;line-height:33px;color:#1c1c1c;white-space:pre;left:1760px;-webkit-text-stroke:0.75px #1c1c1c;">26 H</div><svg style="left:1892px;top:297px;" width="16" height="12" viewBox="0 0 16 12"><path d="M1.5,2 h13 l-6.5,8z" fill="#767676"/></svg><div class="t" style="top:354px;font-size:29.15px;line-height:32px;color:#1c1c1c;white-space:pre;left:1397.5px;-webkit-text-stroke:0.75px #1c1c1c;">Distance:</div><div style="left:1664px;top:343px;width:250.5px;height:50px;background:#fff;border:2px solid #c9151e;box-sizing:border-box;"></div><div class="t" style="top:352px;font-size:27.6px;line-height:31px;color:#1c1c1c;white-space:pre;left:1675px;-webkit-text-stroke:0.75px #1c1c1c;">1.75 Å</div><svg style="left:1886px;top:353px;" width="16" height="32" viewBox="0 0 16 32"><path d="M2,10 h12 l-6,-7.5z" fill="#6e6e6e"/><path d="M2,22 h12 l-6,7.5z" fill="#6e6e6e"/></svg><div style="left:1448px;top:434px;width:52px;height:2px;background:#bdbdbd;"></div><div style="left:1528px;top:435px;width:10px;height:2px;background:#555;"></div><div style="left:1768px;top:434px;width:140px;height:1px;background:#d8d8d8;"></div><div style="left:1279px;top:437px;width:8px;height:655px;background:linear-gradient(to right,rgba(0,0,0,0),rgba(0,0,0,0.16));"></div><div style="left:1286px;top:437px;width:700px;height:655px;background:#ececec;"></div><div style="left:1286px;top:438px;width:700px;height:18px;background:linear-gradient(#dedede,#d0d0d0);border-bottom:1px solid #c2c2c2;box-sizing:border-box;"></div><div style="left:1291.0px;top:441.7px;width:11.0px;height:11.0px;background:#f6534f;border-radius:50%;"></div><div style="left:1309.7px;top:442.25px;width:9.9px;height:9.9px;background:#dcdcdc;border-radius:50%;"></div><div style="left:1327.85px;top:442.25px;width:9.9px;height:9.9px;background:#dcdcdc;border-radius:50%;"></div><svg style="left:1574px;top:440.0px;" width="14" height="14" viewBox="0 0 14 14"><g transform="translate(7,7) scale(0.85)"><circle cx="0" cy="0" r="6" fill="#d6101f"/><circle cx="0.6" cy="0" r="2.7" fill="#fff"/><path d="M-2.5,1 L-0.5,3.5 L1,1z" fill="#d6101f"/></g></svg><div class="t" style="top:440px;font-size:11.82px;line-height:14px;color:#4a4a4a;white-space:pre;left:1591.4px;">StereoFitter Results</div><div style="left:1296.0px;top:477.0px;width:678.5px;height:619.5px;background:#ebebeb;border:1.6px solid #d6d6d6;box-sizing:border-box;"></div><div style="left:1546.7px;top:466.4px;width:69.79999999999995px;height:21.900000000000034px;background:#fcfcfc;border:1.6px solid #d2d2d2;border-bottom:none;border-radius:3px 0 0 0;box-sizing:border-box;"></div><div style="left:1616.5px;top:466.4px;width:106.5px;height:21.900000000000034px;background:#ececec;border:1.6px solid #d2d2d2;border-left:none;border-bottom:none;border-radius:0 3px 0 0;box-sizing:border-box;"></div><div class="t" style="top:471px;font-size:13.5px;line-height:15px;color:#111;white-space:pre;left:1559px;">Results</div><div class="t" style="top:472px;font-size:13.74px;line-height:15px;color:#222;white-space:pre;left:1628.8px;">Original Input</div><svg style="left:1334.6px;top:506.3px;" width="20.4" height="20.4" viewBox="0 0 20.4 20.4"><g transform="translate(10.2,10.2) scale(0.85)"><rect x="-7" y="-7.5" width="14" height="15" rx="1" fill="#f6f9fe" stroke="#4a80cc" stroke-width="1.2"/><rect x="-4.5" y="-5" width="9" height="10" fill="none" stroke="#5a86c8" stroke-width="0.9"/><path d="M-2.5,-3h5M-2.5,-1h5M-2.5,1h5M-2.5,3h5" stroke="#8a8f99" stroke-width="0.9"/><path d="M-7,6 h14" stroke="#3f78c9" stroke-width="1.6"/></g></svg><div class="t" style="top:532px;font-size:10.8px;line-height:12px;color:#000;white-space:pre;left:1328.79px;-webkit-text-stroke:0.25px #000;">Report</div><svg style="left:1387.0px;top:506.3px;" width="20.4" height="20.4" viewBox="0 0 20.4 20.4"><g transform="translate(10.2,10.2) scale(0.85)"><rect x="-7.5" y="-7.5" width="9" height="11" rx="1" fill="#f2f6fc" stroke="#7c9fd2" stroke-width="1"/><rect x="-3" y="-4" width="10" height="12" rx="1" fill="#eef3fb" stroke="#5b8ad0" stroke-width="1.1"/><path d="M-1,-1h6M-1,1.2h6M-1,3.4h6M-1,5.6h6" stroke="#7aa0d8" stroke-width="0.9"/></g></svg><div class="t" style="top:532px;font-size:10.8px;line-height:12px;color:#000;white-space:pre;left:1384.64px;-webkit-text-stroke:0.25px #000;">Copy</div><svg style="left:1918.3px;top:506.3px;" width="20.4" height="20.4" viewBox="0 0 20.4 20.4"><g transform="translate(10.2,10.2) scale(0.85)"><rect x="-7" y="-7.5" width="14" height="13" rx="1" fill="#eef4fc" stroke="#4f86d4" stroke-width="1.2"/><path d="M-3.5,3 v-3 M-0.5,3 v-6 M2.5,3 v-4.5" stroke="#8ab0e4" stroke-width="1.6"/><path d="M4,4 l4,4" stroke="#bbb" stroke-width="1.6"/></g></svg><div class="t" style="top:532px;font-size:10.8px;line-height:12px;color:#000;white-space:pre;left:1915.64px;-webkit-text-stroke:0.25px #000;">Setup</div><div style="left:1320.5px;top:554.5px;width:612.8px;height:260.5px;background:#fff;"></div><div style="left:1320.5px;top:554.5px;width:612.8px;height:17.799999999999955px;background:#efefef;border-top:1px solid #d4d4d4;border-bottom:1px solid #d4d4d4;box-sizing:border-box;"></div><div class="t" style="top:558px;font-size:11.3px;line-height:12px;color:#222;white-space:pre;left:1325.8px;-webkit-text-stroke:0.2px #222;">Solution</div><div class="t" style="top:558px;font-size:11.3px;line-height:12px;color:#222;white-space:pre;left:1603.5px;-webkit-text-stroke:0.2px #222;">χ²</div><div class="t" style="top:558px;font-size:11.3px;line-height:12px;color:#222;white-space:pre;left:1704.3px;-webkit-text-stroke:0.2px #222;">AIC</div><div class="t" style="top:557px;font-size:11.91px;line-height:14px;color:#222;white-space:pre;left:1805.7px;-webkit-text-stroke:0.2px #222;">Relative Probability</div><div style="left:1320.5px;top:590.24px;width:612.8px;height:1px;background:#dcdcdc;"></div><svg style="left:1328px;top:577.6px;" width="10" height="8" viewBox="0 0 10 8"><path d="M1.2,1 h7.6 l-3.8,6z" fill="#8c8c8c"/></svg><div class="t" style="top:574px;font-size:13.78px;line-height:15px;color:#111;white-space:pre;left:1347px;">Solution 1 (2 conformers)</div><div class="t" style="top:574px;font-size:13.8px;line-height:15px;color:#111;white-space:pre;left:1604.2px;">119.851</div><div class="t" style="top:574px;font-size:13.8px;line-height:15px;color:#111;white-space:pre;left:1705px;">121.851</div><div class="t" style="top:574px;font-size:13.8px;line-height:15px;color:#111;white-space:pre;left:1806.5px;">1.000</div><div style="left:1320.5px;top:590.74px;width:612.8px;height:18.27px;background:#0b49d0;"></div><div style="left:1320.5px;top:608.51px;width:612.8px;height:1px;background:#dcdcdc;"></div><div class="t" style="top:593px;font-size:13.8px;line-height:15px;color:#fff;white-space:pre;left:1367.2px;">Conformer 7:</div><div class="t" style="top:593px;font-size:13.8px;line-height:15px;color:#fff;white-space:pre;left:1530.25px;">79.4468%</div><div style="left:1320.5px;top:626.77px;width:612.8px;height:1px;background:#dcdcdc;"></div><div class="t" style="top:611px;font-size:13.8px;line-height:15px;color:#111;white-space:pre;left:1367.2px;">Conformer 12:</div><div class="t" style="top:611px;font-size:13.8px;line-height:15px;color:#111;white-space:pre;left:1530.25px;">20.5532%</div><div style="left:1320.5px;top:645.05px;width:612.8px;height:1px;background:#dcdcdc;"></div><svg style="left:1328px;top:632.4100000000001px;" width="10" height="8" viewBox="0 0 10 8"><path d="M1.2,1 h7.6 l-3.8,6z" fill="#8c8c8c"/></svg><div class="t" style="top:629px;font-size:13.78px;line-height:15px;color:#111;white-space:pre;left:1347px;">Solution 2 (2 conformers)</div><div class="t" style="top:629px;font-size:13.8px;line-height:15px;color:#111;white-space:pre;left:1604.2px;">120.370</div><div class="t" style="top:629px;font-size:13.8px;line-height:15px;color:#111;white-space:pre;left:1705px;">122.370</div><div class="t" style="top:629px;font-size:13.8px;line-height:15px;color:#111;white-space:pre;left:1806.5px;">0.771</div><div style="left:1320.5px;top:663.32px;width:612.8px;height:1px;background:#dcdcdc;"></div><div class="t" style="top:647px;font-size:13.8px;line-height:15px;color:#111;white-space:pre;left:1367.2px;">Conformer 7:</div><div class="t" style="top:647px;font-size:13.8px;line-height:15px;color:#111;white-space:pre;left:1530.25px;">75.3494%</div><div style="left:1320.5px;top:681.59px;width:612.8px;height:1px;background:#dcdcdc;"></div><div class="t" style="top:666px;font-size:13.8px;line-height:15px;color:#111;white-space:pre;left:1367.2px;">Conformer 13:</div><div class="t" style="top:666px;font-size:13.8px;line-height:15px;color:#111;white-space:pre;left:1530.25px;">24.6506%</div><div style="left:1320.5px;top:699.86px;width:612.8px;height:1px;background:#dcdcdc;"></div><svg style="left:1328px;top:687.22px;" width="10" height="8" viewBox="0 0 10 8"><path d="M1.2,1 h7.6 l-3.8,6z" fill="#8c8c8c"/></svg><div class="t" style="top:684px;font-size:13.78px;line-height:15px;color:#111;white-space:pre;left:1347px;">Solution 3 (3 conformers)</div><div class="t" style="top:684px;font-size:13.8px;line-height:15px;color:#111;white-space:pre;left:1604.2px;">118.441</div><div class="t" style="top:684px;font-size:13.8px;line-height:15px;color:#111;white-space:pre;left:1705px;">122.441</div><div class="t" style="top:684px;font-size:13.8px;line-height:15px;color:#111;white-space:pre;left:1806.5px;">0.744</div><div style="left:1320.5px;top:718.13px;width:612.8px;height:1px;background:#dcdcdc;"></div><div class="t" style="top:702px;font-size:13.8px;line-height:15px;color:#111;white-space:pre;left:1367.2px;">Conformer 5:</div><div class="t" style="top:702px;font-size:13.8px;line-height:15px;color:#111;white-space:pre;left:1530.25px;">26.5949%</div><div style="left:1320.5px;top:736.39px;width:612.8px;height:1px;background:#dcdcdc;"></div><div class="t" style="top:721px;font-size:13.8px;line-height:15px;color:#111;white-space:pre;left:1367.2px;">Conformer 7:</div><div class="t" style="top:721px;font-size:13.8px;line-height:15px;color:#111;white-space:pre;left:1530.25px;">53.7287%</div><div style="left:1320.5px;top:754.66px;width:612.8px;height:1px;background:#dcdcdc;"></div><div class="t" style="top:739px;font-size:13.8px;line-height:15px;color:#111;white-space:pre;left:1367.2px;">Conformer 12:</div><div class="t" style="top:739px;font-size:13.8px;line-height:15px;color:#111;white-space:pre;left:1530.25px;">19.6764%</div><div style="left:1320.5px;top:772.93px;width:612.8px;height:1px;background:#dcdcdc;"></div><svg style="left:1328px;top:760.3px;" width="10" height="8" viewBox="0 0 10 8"><path d="M1.2,1 h7.6 l-3.8,6z" fill="#8c8c8c"/></svg><div class="t" style="top:757px;font-size:13.78px;line-height:15px;color:#111;white-space:pre;left:1347px;">Solution 4 (3 conformers)</div><div class="t" style="top:757px;font-size:13.8px;line-height:15px;color:#111;white-space:pre;left:1604.2px;">118.681</div><div class="t" style="top:757px;font-size:13.8px;line-height:15px;color:#111;white-space:pre;left:1705px;">122.681</div><div class="t" style="top:757px;font-size:13.8px;line-height:15px;color:#111;white-space:pre;left:1806.5px;">0.660</div><div style="left:1320.5px;top:791.21px;width:612.8px;height:1px;background:#dcdcdc;"></div><div class="t" style="top:774px;font-size:13.91px;line-height:16px;color:#111;white-space:pre;left:1367.2px;">Conformer 1:14.0466%</div><div style="left:1320.5px;top:809.48px;width:612.8px;height:1px;background:#dcdcdc;"></div><div class="t" style="top:794px;font-size:13.8px;line-height:15px;color:#111;white-space:pre;left:1367.2px;">Conformer 7:</div><div class="t" style="top:794px;font-size:13.8px;line-height:15px;color:#111;white-space:pre;left:1530.25px;">67.1827%</div><div style="left:1320.5px;top:827.75px;width:612.8px;height:1px;background:#dcdcdc;"></div><div class="t" style="top:812px;font-size:13.8px;line-height:15px;color:#111;white-space:pre;left:1367.2px;clip-path:inset(0 0 13.1px 0);">Conformer 12:</div><div class="t" style="top:812px;font-size:13.8px;line-height:15px;color:#111;white-space:pre;left:1530.25px;clip-path:inset(0 0 13.1px 0);">18.7707%</div><div style="left:1598px;top:554.5px;width:1px;height:260.5px;background:#d2d2d2;"></div><div style="left:1698.8px;top:554.5px;width:1px;height:260.5px;background:#d2d2d2;"></div><div style="left:1800.2px;top:554.5px;width:1px;height:260.5px;background:#d2d2d2;"></div><div style="left:1319.5px;top:554.5px;width:1px;height:260.5px;background:#d8d8d8;"></div><div style="left:1933.3px;top:554.5px;width:1px;height:260.5px;background:#d8d8d8;"></div><div style="left:1320.5px;top:815px;width:612.8px;height:1px;background:#d0d0d0;"></div><div style="left:1937px;top:572.3px;width:15.5px;height:242.70000000000005px;background:#fafafa;border:1px solid #dcdcdc;box-sizing:border-box;"></div><div style="left:1938px;top:739.5px;width:13.5px;height:60.5px;background:#c2c2c2;"></div><svg style="left:1937px;top:572.3px;background:#f4f4f4;box-shadow:inset 0 0 0 1px #dcdcdc;" width="15.5" height="15.5" viewBox="0 0 15.5 15.5"><path d="M3.1,10.540000000000001 h9.299999999999999 l-4.6499999999999995,-6.51z" fill="#7c7c7c"/></svg><svg style="left:1937px;top:799.5px;background:#f4f4f4;box-shadow:inset 0 0 0 1px #dcdcdc;" width="15.5" height="15.5" viewBox="0 0 15.5 15.5"><path d="M3.1,4.96 h9.299999999999999 l-4.6499999999999995,6.51z" fill="#7c7c7c"/></svg><svg style="left:1622.9px;top:816px;" width="8" height="5" viewBox="0 0 8 5"><path d="M1,1 h6 l-3,3z" fill="#bdbdbd"/></svg><div style="left:1320.5px;top:824.2px;width:612.9000000000001px;height:256.79999999999995px;background:#fff;"></div><div style="left:1320.5px;top:824.2px;width:612.9000000000001px;height:16.799999999999955px;background:#efefef;border-top:1px solid #d4d4d4;border-bottom:1px solid #d4d4d4;box-sizing:border-box;"></div><div class="t" style="top:827px;font-size:11.3px;line-height:12px;color:#222;white-space:pre;left:1326.2px;-webkit-text-stroke:0.2px #222;">Atoms</div><div class="t" style="top:827px;font-size:11.3px;line-height:12px;color:#222;white-space:pre;left:1468.4px;-webkit-text-stroke:0.2px #222;">Experimental</div><div class="t" style="top:826px;font-size:11.91px;line-height:14px;color:#222;white-space:pre;left:1569.7px;-webkit-text-stroke:0.2px #222;">Calculated Average</div><div style="left:1320.5px;top:859.11px;width:612.9000000000001px;height:1px;background:#dcdcdc;"></div><svg style="left:1328px;top:846.5px;" width="10" height="8" viewBox="0 0 10 8"><path d="M1.2,1 h7.6 l-3.8,6z" fill="#8c8c8c"/></svg><div class="t" style="top:843px;font-size:13.31px;line-height:15px;color:#111;white-space:pre;left:1347px;">NOE distances (Å)</div><div style="left:1320.5px;top:877.35px;width:612.9000000000001px;height:1px;background:#dcdcdc;"></div><div class="t" style="top:861px;font-size:13.8px;line-height:15px;color:#111;white-space:pre;left:1367.2px;">25,41</div><div class="t" style="top:861px;font-size:13.8px;line-height:15px;color:#111;white-space:pre;left:1469.5px;">2.976</div><div class="t" style="top:861px;font-size:13.8px;line-height:15px;color:#111;white-space:pre;left:1570.8px;">5.191</div><div style="left:1320.5px;top:895.58px;width:612.9000000000001px;height:1px;background:#dcdcdc;"></div><div class="t" style="top:880px;font-size:13.8px;line-height:15px;color:#111;white-space:pre;left:1367.2px;">25,29</div><div class="t" style="top:880px;font-size:13.8px;line-height:15px;color:#111;white-space:pre;left:1469.5px;">2.617</div><div class="t" style="top:880px;font-size:13.8px;line-height:15px;color:#111;white-space:pre;left:1570.8px;">2.518</div><div style="left:1320.5px;top:913.81px;width:612.9000000000001px;height:1px;background:#dcdcdc;"></div><div class="t" style="top:898px;font-size:13.8px;line-height:15px;color:#111;white-space:pre;left:1367.2px;">26,41</div><div class="t" style="top:898px;font-size:13.8px;line-height:15px;color:#111;white-space:pre;left:1469.5px;">2.982</div><div class="t" style="top:898px;font-size:13.8px;line-height:15px;color:#111;white-space:pre;left:1570.8px;">4.129</div><div style="left:1320.5px;top:914.3px;width:612.9000000000001px;height:18.23px;background:#fbd9dc;"></div><div style="left:1320.5px;top:932.03px;width:612.9000000000001px;height:1px;background:#dcdcdc;"></div><div class="t" style="top:916px;font-size:13.8px;line-height:15px;color:#111;white-space:pre;left:1367.2px;">26,42</div><div class="t" style="top:916px;font-size:13.8px;line-height:15px;color:#111;white-space:pre;left:1469.5px;">2.648</div><div class="t" style="top:916px;font-size:13.8px;line-height:15px;color:#111;white-space:pre;left:1570.8px;">2.450</div><div style="left:1320.5px;top:950.26px;width:612.9000000000001px;height:1px;background:#dcdcdc;"></div><div class="t" style="top:934px;font-size:13.8px;line-height:15px;color:#111;white-space:pre;left:1367.2px;">26,36</div><div class="t" style="top:934px;font-size:13.8px;line-height:15px;color:#111;white-space:pre;left:1469.5px;">2.823</div><div class="t" style="top:934px;font-size:13.8px;line-height:15px;color:#111;white-space:pre;left:1570.8px;">2.533</div><div style="left:1320.5px;top:968.49px;width:612.9000000000001px;height:1px;background:#dcdcdc;"></div><div class="t" style="top:953px;font-size:13.8px;line-height:15px;color:#111;white-space:pre;left:1367.2px;">26,35</div><div class="t" style="top:953px;font-size:13.8px;line-height:15px;color:#111;white-space:pre;left:1469.5px;">1.991</div><div class="t" style="top:953px;font-size:13.8px;line-height:15px;color:#111;white-space:pre;left:1570.8px;">4.175</div><div style="left:1320.5px;top:986.73px;width:612.9000000000001px;height:1px;background:#dcdcdc;"></div><div class="t" style="top:971px;font-size:13.8px;line-height:15px;color:#111;white-space:pre;left:1367.2px;">26,32</div><div class="t" style="top:971px;font-size:13.8px;line-height:15px;color:#111;white-space:pre;left:1469.5px;">1.991</div><div class="t" style="top:971px;font-size:13.8px;line-height:15px;color:#111;white-space:pre;left:1570.8px;">3.499</div><div style="left:1320.5px;top:1004.96px;width:612.9000000000001px;height:1px;background:#dcdcdc;"></div><div class="t" style="top:989px;font-size:13.8px;line-height:15px;color:#111;white-space:pre;left:1367.2px;">26,30</div><div class="t" style="top:989px;font-size:13.8px;line-height:15px;color:#111;white-space:pre;left:1469.5px;">2.682</div><div class="t" style="top:989px;font-size:13.8px;line-height:15px;color:#111;white-space:pre;left:1570.8px;">4.667</div><div style="left:1320.5px;top:1023.18px;width:612.9000000000001px;height:1px;background:#dcdcdc;"></div><div class="t" style="top:1007px;font-size:13.8px;line-height:15px;color:#111;white-space:pre;left:1367.2px;">26,27</div><div class="t" style="top:1007px;font-size:13.8px;line-height:15px;color:#111;white-space:pre;left:1469.5px;">2.682</div><div class="t" style="top:1007px;font-size:13.8px;line-height:15px;color:#111;white-space:pre;left:1570.8px;">2.272</div><div style="left:1320.5px;top:1041.41px;width:612.9000000000001px;height:1px;background:#dcdcdc;"></div><div class="t" style="top:1026px;font-size:13.8px;line-height:15px;color:#111;white-space:pre;left:1367.2px;">27,33</div><div class="t" style="top:1026px;font-size:13.8px;line-height:15px;color:#111;white-space:pre;left:1469.5px;">2.650</div><div class="t" style="top:1026px;font-size:13.8px;line-height:15px;color:#111;white-space:pre;left:1570.8px;">3.833</div><div style="left:1320.5px;top:1059.64px;width:612.9000000000001px;height:1px;background:#dcdcdc;"></div><div class="t" style="top:1044px;font-size:13.8px;line-height:15px;color:#111;white-space:pre;left:1367.2px;">27,29</div><div class="t" style="top:1044px;font-size:13.8px;line-height:15px;color:#111;white-space:pre;left:1469.5px;">2.686</div><div class="t" style="top:1044px;font-size:13.8px;line-height:15px;color:#111;white-space:pre;left:1570.8px;">3.873</div><div style="left:1320.5px;top:1077.87px;width:612.9000000000001px;height:1px;background:#dcdcdc;"></div><div class="t" style="top:1062px;font-size:13.8px;line-height:15px;color:#111;white-space:pre;left:1367.2px;">28,41</div><div class="t" style="top:1062px;font-size:13.8px;line-height:15px;color:#111;white-space:pre;left:1469.5px;">2.976</div><div class="t" style="top:1062px;font-size:13.8px;line-height:15px;color:#111;white-space:pre;left:1570.8px;">2.715</div><div style="left:1320.5px;top:1096.11px;width:612.9000000000001px;height:1px;background:#dcdcdc;"></div><div class="t" style="top:1080px;font-size:13.8px;line-height:15px;color:#111;white-space:pre;left:1367.2px;clip-path:inset(0 0 15.5px 0);">28,36</div><div class="t" style="top:1080px;font-size:13.8px;line-height:15px;color:#111;white-space:pre;left:1469.5px;clip-path:inset(0 0 15.5px 0);">2.650</div><div class="t" style="top:1080px;font-size:13.8px;line-height:15px;color:#111;white-space:pre;left:1570.8px;clip-path:inset(0 0 15.5px 0);">2.700</div><div style="left:1463px;top:824.2px;width:1px;height:256.79999999999995px;background:#d2d2d2;"></div><div style="left:1564.4px;top:824.2px;width:1px;height:256.79999999999995px;background:#d2d2d2;"></div><div style="left:1319.5px;top:824.2px;width:1px;height:256.79999999999995px;background:#d8d8d8;"></div><div style="left:1933.4px;top:824.2px;width:1px;height:256.79999999999995px;background:#d8d8d8;"></div><div style="left:1936px;top:841px;width:16px;height:241.5px;background:#fafafa;border:1px solid #dcdcdc;box-sizing:border-box;"></div><div style="left:1937px;top:924.4px;width:14px;height:142.19999999999993px;background:#c2c2c2;"></div><svg style="left:1936px;top:841px;background:#f4f4f4;box-shadow:inset 0 0 0 1px #dcdcdc;" width="16" height="16" viewBox="0 0 16 16"><path d="M3.2,10.88 h9.6 l-4.8,-6.72z" fill="#7c7c7c"/></svg><svg style="left:1936px;top:1066.5px;background:#f4f4f4;box-shadow:inset 0 0 0 1px #dcdcdc;" width="16" height="16" viewBox="0 0 16 16"><path d="M3.2,5.12 h9.6 l-4.8,6.72z" fill="#7c7c7c"/></svg><div style="left:615px;top:437px;width:672px;height:660px;background:#ececec;"></div><div style="left:615px;top:438px;width:672px;height:17px;background:linear-gradient(#f3f3f3,#e9e9e9);border-bottom:1px solid #d9d9d9;box-sizing:border-box;"></div><div style="left:621.4px;top:441.9px;width:9.2px;height:9.2px;background:#dedede;border-radius:50%;"></div><div style="left:636.4px;top:441.9px;width:9.2px;height:9.2px;background:#dedede;border-radius:50%;"></div><div style="left:651.4px;top:441.9px;width:9.2px;height:9.2px;background:#dedede;border-radius:50%;"></div><svg style="left:933px;top:439.5px;" width="14" height="14" viewBox="0 0 14 14"><g transform="translate(7,7) scale(0.9)"><circle cx="0" cy="0" r="6" fill="#b9b9b9"/><circle cx="0.6" cy="0" r="2.7" fill="#ececec"/><path d="M-2.5,1 L-0.5,3.5 L1,1z" fill="#b9b9b9"/></g></svg><div class="t" style="top:440px;font-size:11.57px;line-height:12px;color:#b5b5b5;white-space:pre;left:950.5px;">3D Molecule</div><div style="left:998px;top:467.5px;width:47px;height:42.5px;background:#b2b2b2;"></div><svg style="left:643.5px;top:467.5px;" width="24.0" height="24.0" viewBox="0 0 24.0 24.0"><g transform="translate(12.0,12.0) scale(1.0)"><path d="M-7,-5 h5 l1.5,1.5 h7.5 v9 h-14z" fill="#f5a800"/><path d="M-7,-1.5 h14 v6 h-14z" fill="#ffc629"/></g></svg><div class="t" style="top:492px;font-size:10.7px;line-height:12px;color:#000;white-space:pre;left:634.04px;-webkit-text-stroke:0.25px #000;">Load File</div><svg style="left:716.0px;top:466.5px;" width="24.0" height="24.0" viewBox="0 0 24.0 24.0"><g transform="translate(12.0,12.0) scale(1.0)"><path d="M-5,-8 h4 l1,1.2 h5 v6 h-10z" fill="#e89a00"/><path d="M-7,-3 h5 l1.5,1.5 h7.5 v9 h-14z" fill="#f5a800"/><path d="M-7,0.5 h14 v7 h-14z" fill="#ffc21a"/></g></svg><div class="t" style="top:492px;font-size:10.7px;line-height:12px;color:#000;white-space:pre;left:699.55px;-webkit-text-stroke:0.25px #000;">Load Folder</div><svg style="left:777.6px;top:466.5px;" width="24.0" height="24.0" viewBox="0 0 24.0 24.0"><g transform="translate(12.0,12.0) scale(1.0)"><rect x="-7" y="-7" width="14" height="14" rx="1.5" fill="#1c4fa8"/><rect x="-4.5" y="-7" width="9" height="5" fill="#e8eefc"/><rect x="1" y="-6" width="2" height="3.5" fill="#1c4fa8"/><rect x="-5" y="1" width="10" height="6" fill="#d8e2f8"/></g></svg><div class="t" style="top:492px;font-size:10.7px;line-height:12px;color:#000;white-space:pre;left:777.56px;-webkit-text-stroke:0.25px #000;">Save</div><div style="left:816.5px;top:465px;width:1px;height:47px;background:#d2d2d2;"></div><div style="left:817.5px;top:465px;width:1px;height:47px;background:#fafafa;"></div><svg style="left:836.7px;top:466.5px;" width="24.0" height="24.0" viewBox="0 0 24.0 24.0"><g transform="translate(12.0,12.0) scale(1.0)"><rect x="-7" y="-7.5" width="14" height="15" rx="1" fill="#f6f9fe" stroke="#4a80cc" stroke-width="1.2"/><rect x="-4.5" y="-5" width="9" height="10" fill="none" stroke="#5a86c8" stroke-width="0.9"/><path d="M-2.5,-3h5M-2.5,-1h5M-2.5,1h5M-2.5,3h5" stroke="#8a8f99" stroke-width="0.9"/><path d="M-7,6 h14" stroke="#3f78c9" stroke-width="1.6"/></g></svg><div class="t" style="top:492px;font-size:10.7px;line-height:12px;color:#000;white-space:pre;left:833.14px;-webkit-text-stroke:0.25px #000;">Report</div><svg style="left:887.0px;top:466.5px;" width="24.0" height="24.0" viewBox="0 0 24.0 24.0"><g transform="translate(12.0,12.0) scale(1.0)"><rect x="-7.5" y="-7.5" width="9" height="11" rx="1" fill="#f2f6fc" stroke="#7c9fd2" stroke-width="1"/><rect x="-3" y="-4" width="10" height="12" rx="1" fill="#eef3fb" stroke="#5b8ad0" stroke-width="1.1"/><path d="M-1,-1h6M-1,1.2h6M-1,3.4h6M-1,5.6h6" stroke="#7aa0d8" stroke-width="0.9"/></g></svg><div class="t" style="top:492px;font-size:10.7px;line-height:12px;color:#000;white-space:pre;left:886.61px;-webkit-text-stroke:0.25px #000;">Copy</div><div style="left:926px;top:465px;width:1px;height:47px;background:#d2d2d2;"></div><div style="left:927px;top:465px;width:1px;height:47px;background:#fafafa;"></div><svg style="left:947.2px;top:466.5px;" width="24.0" height="24.0" viewBox="0 0 24.0 24.0"><g transform="translate(12.0,12.0) scale(1.0)"><path d="M-7,-3 h9 l-2,4 h-7z" fill="none" stroke="#4a3fd0" stroke-width="1.2"/><path d="M-7,2.5 h11 l-2,4 h-9z" fill="none" stroke="#6a4fe0" stroke-width="1.2"/><path d="M-6,-6 l4,3" stroke="#4a3fd0" stroke-width="1.1"/><path d="M1,-7 l6,5 M7,-7 l-6,5" stroke="#e8102a" stroke-width="2.4"/></g></svg><div class="t" style="top:492px;font-size:10.7px;line-height:12px;color:#000;white-space:pre;left:943.74px;-webkit-text-stroke:0.25px #000;">Delete</div><svg style="left:983px;top:495px;" width="8" height="5" viewBox="0 0 8 5"><path d="M1,1 h5 l-2.5,3z" fill="#555"/></svg><svg style="left:1008.0px;top:466.5px;" width="24.0" height="24.0" viewBox="0 0 24.0 24.0"><g transform="translate(12.0,12.0) scale(1.0)"><path d="M-3,-8 v12 l2.8,-2.6 2,4.6 2,-0.9 -2,-4.5 3.8,0z" fill="#f4f4f4" stroke="#555" stroke-width="0.9"/></g></svg><div class="t" style="top:492px;font-size:10.7px;line-height:12px;color:#000;white-space:pre;left:1006.28px;-webkit-text-stroke:0.25px #000;">Select</div><svg style="left:1065.3px;top:466.5px;" width="24.0" height="24.0" viewBox="0 0 24.0 24.0"><g transform="translate(12.0,12.0) scale(1.0)"><path d="M-6,5 L5,-6 M-2.5,7 L7,-2.5" stroke="#2d6fd6" stroke-width="1.4"/><path d="M-1,-6 h8" stroke="#9aa" stroke-width="0.8"/><circle cx="-5" cy="6" r="1.8" fill="#3fc23f"/></g></svg><div class="t" style="top:492px;font-size:10.7px;line-height:12px;color:#000;white-space:pre;left:1058.19px;-webkit-text-stroke:0.25px #000;">Distance</div><svg style="left:1123.4px;top:466.5px;" width="24.0" height="24.0" viewBox="0 0 24.0 24.0"><g transform="translate(12.0,12.0) scale(1.0)"><rect x="-7" y="-7.5" width="4.5" height="4.5" fill="#fff" stroke="#2d6fd6" stroke-width="1.2"/><rect x="0" y="-4" width="4.5" height="4.5" fill="#fff" stroke="#2d6fd6" stroke-width="1.2"/><path d="M-4,4 h10 M5.5,-5 v11" stroke="#2d6fd6" stroke-width="1.2"/><circle cx="6" cy="5.5" r="1.7" fill="#3fc23f"/></g></svg><div class="t" style="top:492px;font-size:10.7px;line-height:12px;color:#000;white-space:pre;left:1121.52px;-webkit-text-stroke:0.25px #000;">Angle</div><svg style="left:1177.6px;top:466.5px;" width="24.0" height="24.0" viewBox="0 0 24.0 24.0"><g transform="translate(12.0,12.0) scale(1.0)"><path d="M-5.5,-6 v10 M5.5,-6 v10 M-5.5,4 h11" stroke="#2d6fd6" stroke-width="1.3" fill="none"/><path d="M-2.5,-6 l1.2,6 1.3,-4 1.3,4 1.2,-6" stroke="#2d6fd6" stroke-width="1" fill="none"/><circle cx="-4" cy="6" r="1.8" fill="#3fc23f"/><circle cx="4" cy="6" r="1.8" fill="#3fc23f"/></g></svg><div class="t" style="top:492px;font-size:10.7px;line-height:12px;color:#000;white-space:pre;left:1170.28px;-webkit-text-stroke:0.25px #000;">Dihedral</div><svg style="left:1240.0px;top:466.5px;" width="24.0" height="24.0" viewBox="0 0 24.0 24.0"><g transform="translate(12.0,12.0) scale(1.0)"><path d="M-6,5 L5,-6 M-2.5,7 L7,-2.5" stroke="#2d6fd6" stroke-width="1.4"/><circle cx="-5.5" cy="6" r="1.8" fill="#3fc23f"/><circle cx="6" cy="5" r="1.5" fill="#bbb"/></g></svg><div class="t" style="top:492px;font-size:10.7px;line-height:12px;color:#000;white-space:pre;left:1232.08px;-webkit-text-stroke:0.25px #000;">Coupling</div><svg style="left:630.5px;top:522.5px;" width="18" height="18" viewBox="0 0 18 18"><g transform="translate(9,9) scale(1.0)"><rect x="-6.5" y="-7" width="2.2" height="14" fill="#1a6fe8"/><path d="M5.5,-7 v14 l-9,-7z" fill="#1a6fe8"/></g></svg><svg style="left:660.8px;top:522.5px;" width="18" height="18" viewBox="0 0 18 18"><g transform="translate(9,9) scale(1.0)"><path d="M4.5,-7 v14 l-9.5,-7z" fill="#1a6fe8"/></g></svg><svg style="left:690.6px;top:522.5px;" width="18" height="18" viewBox="0 0 18 18"><g transform="translate(9,9) scale(1.0)"><path d="M-4.5,-7 v14 l9.5,-7z" fill="#1a6fe8"/></g></svg><svg style="left:721.2px;top:522.5px;" width="18" height="18" viewBox="0 0 18 18"><g transform="translate(9,9) scale(1.0)"><rect x="4.3" y="-7" width="2.2" height="14" fill="#1a6fe8"/><path d="M-5.5,-7 v14 l9,-7z" fill="#1a6fe8"/></g></svg><div style="left:748.7px;top:518px;width:1px;height:27px;background:#d2d2d2;"></div><div style="left:749.7px;top:518px;width:1px;height:27px;background:#fafafa;"></div><svg style="left:761.5px;top:522.5px;" width="18" height="18" viewBox="0 0 18 18"><g transform="translate(9,9) scale(0.95)"><path d="M-6,-6 h12 l-6,4.5z" fill="#1a6fe8"/><path d="M-6,-0.5 l6,4.5 6,-4.5 v2.5 l-6,4.5 -6,-4.5z" fill="#1a6fe8"/><path d="M-6,-6 l6,4.5 6,-4.5" fill="none" stroke="#1a6fe8" stroke-width="1.5"/></g></svg><svg style="left:790.8px;top:521.5px;" width="20" height="20" viewBox="0 0 20 20"><g transform="translate(10,10) scale(1.0)"><path d="M0,-8 v15" stroke="#1a6fe8" stroke-width="1.6"/><path d="M-3,-1 v7 M3,0 v6" stroke="#1a6fe8" stroke-width="1.6"/><path d="M-8,5.5 h16" stroke="#1a6fe8" stroke-width="1" stroke-dasharray="2 1.5"/></g></svg><div class="t" style="top:555px;font-size:13.68px;line-height:15px;color:#000;white-space:pre;left:625.6px;">Energy (kcal/mol):</div><div style="left:743.5px;top:552px;width:236px;height:19px;background:#fff;box-shadow:inset 0 1px 0 #c9c9c9, inset 0 0 0 1px #e2e2e2;"></div><div class="t" style="top:555px;font-size:12.9px;line-height:15px;color:#000;white-space:pre;left:746.5px;">110.73</div><div class="t" style="top:555px;font-size:13.47px;line-height:15px;color:#000;white-space:pre;left:988.7px;">Population (%):</div><div style="left:1087.5px;top:552px;width:198px;height:19px;background:#fff;box-shadow:inset 0 1px 0 #c9c9c9, inset 0 0 0 1px #e2e2e2;"></div><div class="t" style="top:554px;font-size:14.39px;line-height:16px;color:#000;white-space:pre;left:1091px;">2.99</div><svg style="left:624.5px;top:578.5px;background:#000;overflow:hidden" width="661" height="504.5" viewBox="624.5 578.5 661 504.5"><linearGradient id="g35" gradientUnits="userSpaceOnUse" x1="1017.46" y1="718.37" x2="1023.84" y2="718.93"><stop offset="0" stop-color="#00d000"/><stop offset="0.18" stop-color="#00f400"/><stop offset="0.6" stop-color="#00ee00"/><stop offset="0.85" stop-color="#00c400"/><stop offset="1" stop-color="#007a00"/></linearGradient><line x1="1022.1" y1="702.1" x2="1019.2" y2="735.2" stroke="url(#g35)" stroke-width="6.4" stroke-linecap="round"/><linearGradient id="g36" gradientUnits="userSpaceOnUse" x1="1009.31" y1="754.84" x2="1015.39" y2="756.86"><stop offset="0" stop-color="#00d000"/><stop offset="0.18" stop-color="#00f400"/><stop offset="0.6" stop-color="#00ee00"/><stop offset="0.85" stop-color="#00c400"/><stop offset="1" stop-color="#007a00"/></linearGradient><line x1="1019.2" y1="735.2" x2="1005.5" y2="776.5" stroke="url(#g36)" stroke-width="6.4" stroke-linecap="round"/><linearGradient id="g37" gradientUnits="userSpaceOnUse" x1="997.36" y1="788.81" x2="1003.34" y2="791.09"><stop offset="0" stop-color="#00d000"/><stop offset="0.18" stop-color="#00f400"/><stop offset="0.6" stop-color="#00ee00"/><stop offset="0.85" stop-color="#00c400"/><stop offset="1" stop-color="#007a00"/></linearGradient><line x1="1005.5" y1="776.5" x2="995.2" y2="803.4" stroke="url(#g37)" stroke-width="6.4" stroke-linecap="round"/><linearGradient id="g38" gradientUnits="userSpaceOnUse" x1="1039.84" y1="751.45" x2="1037.36" y2="757.35"><stop offset="0" stop-color="#bcbcbc"/><stop offset="0.25" stop-color="#f4f4f4"/><stop offset="0.6" stop-color="#d8d8d8"/><stop offset="0.85" stop-color="#a8a8a8"/><stop offset="1" stop-color="#707070"/></linearGradient><line x1="1030.3" y1="750.9" x2="1046.9" y2="757.9" stroke="url(#g38)" stroke-width="6.4" stroke-linecap="round"/><linearGradient id="g39" gradientUnits="userSpaceOnUse" x1="1024.9" y1="744.72" x2="1022.1" y2="750.48"><stop offset="0" stop-color="#00d000"/><stop offset="0.18" stop-color="#00f400"/><stop offset="0.6" stop-color="#00ee00"/><stop offset="0.85" stop-color="#00c400"/><stop offset="1" stop-color="#007a00"/></linearGradient><line x1="1016.7" y1="744.3" x2="1030.3" y2="750.9" stroke="url(#g39)" stroke-width="6.4" stroke-linecap="round"/><linearGradient id="g40" gradientUnits="userSpaceOnUse" x1="1008.6" y1="726.56" x2="1003.3" y2="730.14"><stop offset="0" stop-color="#00d000"/><stop offset="0.18" stop-color="#00f400"/><stop offset="0.6" stop-color="#00ee00"/><stop offset="0.85" stop-color="#00c400"/><stop offset="1" stop-color="#007a00"/></linearGradient><line x1="995.2" y1="712.4" x2="1016.7" y2="744.3" stroke="url(#g40)" stroke-width="6.4" stroke-linecap="round"/><linearGradient id="g41" gradientUnits="userSpaceOnUse" x1="1010.34" y1="730.85" x2="1004.86" y2="734.15"><stop offset="0" stop-color="#bcbcbc"/><stop offset="0.25" stop-color="#f4f4f4"/><stop offset="0.6" stop-color="#d8d8d8"/><stop offset="0.85" stop-color="#a8a8a8"/><stop offset="1" stop-color="#707070"/></linearGradient><line x1="1009.7" y1="736.0" x2="1005.5" y2="729.0" stroke="url(#g41)" stroke-width="6.4" stroke-linecap="round"/><linearGradient id="g42" gradientUnits="userSpaceOnUse" x1="1015.65" y1="738.09" x2="1010.75" y2="742.21"><stop offset="0" stop-color="#00d000"/><stop offset="0.18" stop-color="#00f400"/><stop offset="0.6" stop-color="#00ee00"/><stop offset="0.85" stop-color="#00c400"/><stop offset="1" stop-color="#007a00"/></linearGradient><line x1="1016.7" y1="744.3" x2="1009.7" y2="736.0" stroke="url(#g42)" stroke-width="6.4" stroke-linecap="round"/><linearGradient id="g43" gradientUnits="userSpaceOnUse" x1="895.36" y1="692.97" x2="901.74" y2="692.53"><stop offset="0" stop-color="#bcbcbc"/><stop offset="0.25" stop-color="#f4f4f4"/><stop offset="0.6" stop-color="#d8d8d8"/><stop offset="0.85" stop-color="#a8a8a8"/><stop offset="1" stop-color="#707070"/></linearGradient><line x1="899.2" y1="702.1" x2="897.9" y2="683.4" stroke="url(#g43)" stroke-width="6.4" stroke-linecap="round"/><linearGradient id="g44" gradientUnits="userSpaceOnUse" x1="896.4" y1="710.5" x2="902.8" y2="710.2"><stop offset="0" stop-color="#00d000"/><stop offset="0.18" stop-color="#00f400"/><stop offset="0.6" stop-color="#00ee00"/><stop offset="0.85" stop-color="#00c400"/><stop offset="1" stop-color="#007a00"/></linearGradient><line x1="900.0" y1="718.6" x2="899.2" y2="702.1" stroke="url(#g44)" stroke-width="6.4" stroke-linecap="round"/><linearGradient id="g45" gradientUnits="userSpaceOnUse" x1="846.25" y1="757.6" x2="846.25" y2="764.0"><stop offset="0" stop-color="#bcbcbc"/><stop offset="0.25" stop-color="#f4f4f4"/><stop offset="0.6" stop-color="#d8d8d8"/><stop offset="0.85" stop-color="#a8a8a8"/><stop offset="1" stop-color="#707070"/></linearGradient><line x1="856.6" y1="760.8" x2="835.9" y2="760.8" stroke="url(#g45)" stroke-width="6.4" stroke-linecap="round"/><linearGradient id="g46" gradientUnits="userSpaceOnUse" x1="862.59" y1="757.21" x2="863.01" y2="763.59"><stop offset="0" stop-color="#00d000"/><stop offset="0.18" stop-color="#00f400"/><stop offset="0.6" stop-color="#00ee00"/><stop offset="0.85" stop-color="#00c400"/><stop offset="1" stop-color="#007a00"/></linearGradient><line x1="869.0" y1="760.0" x2="856.6" y2="760.8" stroke="url(#g46)" stroke-width="6.4" stroke-linecap="round"/><linearGradient id="g47" gradientUnits="userSpaceOnUse" x1="867.21" y1="788.79" x2="873.59" y2="788.31"><stop offset="0" stop-color="#bcbcbc"/><stop offset="0.25" stop-color="#f4f4f4"/><stop offset="0.6" stop-color="#d8d8d8"/><stop offset="0.85" stop-color="#a8a8a8"/><stop offset="1" stop-color="#707070"/></linearGradient><line x1="869.8" y1="780.7" x2="871.0" y2="796.4" stroke="url(#g47)" stroke-width="6.4" stroke-linecap="round"/><linearGradient id="g48" gradientUnits="userSpaceOnUse" x1="866.2" y1="770.47" x2="872.6" y2="770.23"><stop offset="0" stop-color="#00d000"/><stop offset="0.18" stop-color="#00f400"/><stop offset="0.6" stop-color="#00ee00"/><stop offset="0.85" stop-color="#00c400"/><stop offset="1" stop-color="#007a00"/></linearGradient><line x1="869.0" y1="760.0" x2="869.8" y2="780.7" stroke="url(#g48)" stroke-width="6.4" stroke-linecap="round"/><linearGradient id="g49" gradientUnits="userSpaceOnUse" x1="881.94" y1="737.38" x2="887.06" y2="741.22"><stop offset="0" stop-color="#00d000"/><stop offset="0.18" stop-color="#00f400"/><stop offset="0.6" stop-color="#00ee00"/><stop offset="0.85" stop-color="#00c400"/><stop offset="1" stop-color="#007a00"/></linearGradient><line x1="900.0" y1="718.6" x2="869.0" y2="760.0" stroke="url(#g49)" stroke-width="6.4" stroke-linecap="round"/><linearGradient id="g50" gradientUnits="userSpaceOnUse" x1="918.43" y1="714.4" x2="918.77" y2="720.8"><stop offset="0" stop-color="#00d000"/><stop offset="0.18" stop-color="#00f400"/><stop offset="0.6" stop-color="#00ee00"/><stop offset="0.85" stop-color="#00c400"/><stop offset="1" stop-color="#007a00"/></linearGradient><line x1="900.0" y1="718.6" x2="937.2" y2="716.6" stroke="url(#g50)" stroke-width="6.4" stroke-linecap="round"/><linearGradient id="g51" gradientUnits="userSpaceOnUse" x1="930.0" y1="690.44" x2="936.2" y2="688.86"><stop offset="0" stop-color="#bcbcbc"/><stop offset="0.25" stop-color="#f4f4f4"/><stop offset="0.6" stop-color="#d8d8d8"/><stop offset="0.85" stop-color="#a8a8a8"/><stop offset="1" stop-color="#707070"/></linearGradient><line x1="935.2" y1="697.9" x2="931.0" y2="681.4" stroke="url(#g51)" stroke-width="6.4" stroke-linecap="round"/><linearGradient id="g52" gradientUnits="userSpaceOnUse" x1="933.02" y1="707.59" x2="939.38" y2="706.91"><stop offset="0" stop-color="#00d000"/><stop offset="0.18" stop-color="#00f400"/><stop offset="0.6" stop-color="#00ee00"/><stop offset="0.85" stop-color="#00c400"/><stop offset="1" stop-color="#007a00"/></linearGradient><line x1="937.2" y1="716.6" x2="935.2" y2="697.9" stroke="url(#g52)" stroke-width="6.4" stroke-linecap="round"/><linearGradient id="g53" gradientUnits="userSpaceOnUse" x1="935.06" y1="735.38" x2="941.44" y2="735.02"><stop offset="0" stop-color="#00d000"/><stop offset="0.18" stop-color="#00f400"/><stop offset="0.6" stop-color="#00ee00"/><stop offset="0.85" stop-color="#00c400"/><stop offset="1" stop-color="#007a00"/></linearGradient><line x1="937.2" y1="716.6" x2="939.3" y2="753.8" stroke="url(#g53)" stroke-width="6.4" stroke-linecap="round"/><linearGradient id="g54" gradientUnits="userSpaceOnUse" x1="936.73" y1="738.53" x2="930.77" y2="740.87"><stop offset="0" stop-color="#bcbcbc"/><stop offset="0.25" stop-color="#f4f4f4"/><stop offset="0.6" stop-color="#d8d8d8"/><stop offset="0.85" stop-color="#a8a8a8"/><stop offset="1" stop-color="#707070"/></linearGradient><line x1="935.2" y1="743.4" x2="932.3" y2="736.0" stroke="url(#g54)" stroke-width="6.4" stroke-linecap="round"/><linearGradient id="g55" gradientUnits="userSpaceOnUse" x1="940.23" y1="747.43" x2="934.27" y2="749.77"><stop offset="0" stop-color="#00d000"/><stop offset="0.18" stop-color="#00f400"/><stop offset="0.6" stop-color="#00ee00"/><stop offset="0.85" stop-color="#00c400"/><stop offset="1" stop-color="#007a00"/></linearGradient><line x1="939.3" y1="753.8" x2="935.2" y2="743.4" stroke="url(#g55)" stroke-width="6.4" stroke-linecap="round"/><linearGradient id="g56" gradientUnits="userSpaceOnUse" x1="916.01" y1="770.07" x2="920.39" y2="774.73"><stop offset="0" stop-color="#bcbcbc"/><stop offset="0.25" stop-color="#f4f4f4"/><stop offset="0.6" stop-color="#d8d8d8"/><stop offset="0.85" stop-color="#a8a8a8"/><stop offset="1" stop-color="#707070"/></linearGradient><line x1="924.8" y1="766.2" x2="911.6" y2="778.6" stroke="url(#g56)" stroke-width="6.4" stroke-linecap="round"/><linearGradient id="g57" gradientUnits="userSpaceOnUse" x1="929.97" y1="757.57" x2="934.13" y2="762.43"><stop offset="0" stop-color="#00d000"/><stop offset="0.18" stop-color="#00f400"/><stop offset="0.6" stop-color="#00ee00"/><stop offset="0.85" stop-color="#00c400"/><stop offset="1" stop-color="#007a00"/></linearGradient><line x1="939.3" y1="753.8" x2="924.8" y2="766.2" stroke="url(#g57)" stroke-width="6.4" stroke-linecap="round"/><linearGradient id="g58" gradientUnits="userSpaceOnUse" x1="965.97" y1="711.31" x2="966.43" y2="717.69"><stop offset="0" stop-color="#00d000"/><stop offset="0.18" stop-color="#00f400"/><stop offset="0.6" stop-color="#00ee00"/><stop offset="0.85" stop-color="#00c400"/><stop offset="1" stop-color="#007a00"/></linearGradient><line x1="937.2" y1="716.6" x2="995.2" y2="712.4" stroke="url(#g58)" stroke-width="6.4" stroke-linecap="round"/><linearGradient id="g59" gradientUnits="userSpaceOnUse" x1="996.61" y1="686.98" x2="1002.89" y2="688.22"><stop offset="0" stop-color="#bcbcbc"/><stop offset="0.25" stop-color="#f4f4f4"/><stop offset="0.6" stop-color="#d8d8d8"/><stop offset="0.85" stop-color="#a8a8a8"/><stop offset="1" stop-color="#707070"/></linearGradient><line x1="998.1" y1="695.9" x2="1001.4" y2="679.3" stroke="url(#g59)" stroke-width="6.4" stroke-linecap="round"/><linearGradient id="g60" gradientUnits="userSpaceOnUse" x1="993.5" y1="703.6" x2="999.8" y2="704.7"><stop offset="0" stop-color="#00d000"/><stop offset="0.18" stop-color="#00f400"/><stop offset="0.6" stop-color="#00ee00"/><stop offset="0.85" stop-color="#00c400"/><stop offset="1" stop-color="#007a00"/></linearGradient><line x1="995.2" y1="712.4" x2="998.1" y2="695.9" stroke="url(#g60)" stroke-width="6.4" stroke-linecap="round"/><linearGradient id="g61" gradientUnits="userSpaceOnUse" x1="1007.51" y1="704.26" x2="1009.79" y2="710.24"><stop offset="0" stop-color="#00d000"/><stop offset="0.18" stop-color="#00f400"/><stop offset="0.6" stop-color="#00ee00"/><stop offset="0.85" stop-color="#00c400"/><stop offset="1" stop-color="#007a00"/></linearGradient><line x1="995.2" y1="712.4" x2="1022.1" y2="702.1" stroke="url(#g61)" stroke-width="6.4" stroke-linecap="round"/><linearGradient id="g62" gradientUnits="userSpaceOnUse" x1="1011.16" y1="679.64" x2="1017.24" y2="677.66"><stop offset="0" stop-color="#bcbcbc"/><stop offset="0.25" stop-color="#f4f4f4"/><stop offset="0.6" stop-color="#d8d8d8"/><stop offset="0.85" stop-color="#a8a8a8"/><stop offset="1" stop-color="#707070"/></linearGradient><line x1="1016.7" y1="686.3" x2="1011.7" y2="671.0" stroke="url(#g62)" stroke-width="6.4" stroke-linecap="round"/><linearGradient id="g63" gradientUnits="userSpaceOnUse" x1="1016.37" y1="695.23" x2="1022.43" y2="693.17"><stop offset="0" stop-color="#00d000"/><stop offset="0.18" stop-color="#00f400"/><stop offset="0.6" stop-color="#00ee00"/><stop offset="0.85" stop-color="#00c400"/><stop offset="1" stop-color="#007a00"/></linearGradient><line x1="1022.1" y1="702.1" x2="1016.7" y2="686.3" stroke="url(#g63)" stroke-width="6.4" stroke-linecap="round"/><linearGradient id="g64" gradientUnits="userSpaceOnUse" x1="1051.11" y1="695.77" x2="1051.79" y2="702.13"><stop offset="0" stop-color="#bcbcbc"/><stop offset="0.25" stop-color="#f4f4f4"/><stop offset="0.6" stop-color="#d8d8d8"/><stop offset="0.85" stop-color="#a8a8a8"/><stop offset="1" stop-color="#707070"/></linearGradient><line x1="1041.5" y1="700.0" x2="1061.4" y2="697.9" stroke="url(#g64)" stroke-width="6.4" stroke-linecap="round"/><linearGradient id="g65" gradientUnits="userSpaceOnUse" x1="1031.46" y1="697.87" x2="1032.14" y2="704.23"><stop offset="0" stop-color="#00d000"/><stop offset="0.18" stop-color="#00f400"/><stop offset="0.6" stop-color="#00ee00"/><stop offset="0.85" stop-color="#00c400"/><stop offset="1" stop-color="#007a00"/></linearGradient><line x1="1022.1" y1="702.1" x2="1041.5" y2="700.0" stroke="url(#g65)" stroke-width="6.4" stroke-linecap="round"/><linearGradient id="g66" gradientUnits="userSpaceOnUse" x1="952.11" y1="756.53" x2="949.29" y2="762.27"><stop offset="0" stop-color="#00d000"/><stop offset="0.18" stop-color="#00f400"/><stop offset="0.6" stop-color="#00ee00"/><stop offset="0.85" stop-color="#00c400"/><stop offset="1" stop-color="#007a00"/></linearGradient><line x1="939.3" y1="753.8" x2="962.1" y2="765.0" stroke="url(#g66)" stroke-width="6.4" stroke-linecap="round"/><linearGradient id="g67" gradientUnits="userSpaceOnUse" x1="974.9" y1="767.9" x2="972.0" y2="773.6"><stop offset="0" stop-color="#2016b0"/><stop offset="0.25" stop-color="#3428e4"/><stop offset="0.6" stop-color="#2a1ecc"/><stop offset="0.85" stop-color="#1c129a"/><stop offset="1" stop-color="#100a60"/></linearGradient><line x1="962.1" y1="765.0" x2="984.8" y2="776.5" stroke="url(#g67)" stroke-width="6.4" stroke-linecap="round"/><linearGradient id="g68" gradientUnits="userSpaceOnUse" x1="990.06" y1="768.24" x2="994.04" y2="773.26"><stop offset="0" stop-color="#2016b0"/><stop offset="0.25" stop-color="#3428e4"/><stop offset="0.6" stop-color="#2a1ecc"/><stop offset="0.85" stop-color="#1c129a"/><stop offset="1" stop-color="#100a60"/></linearGradient><line x1="984.8" y1="776.5" x2="999.3" y2="765.0" stroke="url(#g68)" stroke-width="6.4" stroke-linecap="round"/><linearGradient id="g69" gradientUnits="userSpaceOnUse" x1="1005.92" y1="760.41" x2="1007.18" y2="766.69"><stop offset="0" stop-color="#00d000"/><stop offset="0.18" stop-color="#00f400"/><stop offset="0.6" stop-color="#00ee00"/><stop offset="0.85" stop-color="#00c400"/><stop offset="1" stop-color="#007a00"/></linearGradient><line x1="999.3" y1="765.0" x2="1013.8" y2="762.1" stroke="url(#g69)" stroke-width="6.4" stroke-linecap="round"/><linearGradient id="g70" gradientUnits="userSpaceOnUse" x1="1045.91" y1="759.9" x2="1045.79" y2="766.3"><stop offset="0" stop-color="#bcbcbc"/><stop offset="0.25" stop-color="#f4f4f4"/><stop offset="0.6" stop-color="#d8d8d8"/><stop offset="0.85" stop-color="#a8a8a8"/><stop offset="1" stop-color="#707070"/></linearGradient><line x1="1034.5" y1="762.9" x2="1057.2" y2="763.3" stroke="url(#g70)" stroke-width="6.4" stroke-linecap="round"/><linearGradient id="g71" gradientUnits="userSpaceOnUse" x1="1024.27" y1="759.3" x2="1024.03" y2="765.7"><stop offset="0" stop-color="#00d000"/><stop offset="0.18" stop-color="#00f400"/><stop offset="0.6" stop-color="#00ee00"/><stop offset="0.85" stop-color="#00c400"/><stop offset="1" stop-color="#007a00"/></linearGradient><line x1="1013.8" y1="762.1" x2="1034.5" y2="762.9" stroke="url(#g71)" stroke-width="6.4" stroke-linecap="round"/><linearGradient id="g72" gradientUnits="userSpaceOnUse" x1="999.43" y1="768.84" x2="1003.27" y2="773.96"><stop offset="0" stop-color="#bcbcbc"/><stop offset="0.25" stop-color="#f4f4f4"/><stop offset="0.6" stop-color="#d8d8d8"/><stop offset="0.85" stop-color="#a8a8a8"/><stop offset="1" stop-color="#707070"/></linearGradient><line x1="1005.5" y1="768.3" x2="997.2" y2="774.5" stroke="url(#g72)" stroke-width="6.4" stroke-linecap="round"/><linearGradient id="g73" gradientUnits="userSpaceOnUse" x1="1007.73" y1="762.64" x2="1011.57" y2="767.76"><stop offset="0" stop-color="#00d000"/><stop offset="0.18" stop-color="#00f400"/><stop offset="0.6" stop-color="#00ee00"/><stop offset="0.85" stop-color="#00c400"/><stop offset="1" stop-color="#007a00"/></linearGradient><line x1="1013.8" y1="762.1" x2="1005.5" y2="768.3" stroke="url(#g73)" stroke-width="6.4" stroke-linecap="round"/><linearGradient id="g74" gradientUnits="userSpaceOnUse" x1="990.3" y1="782.02" x2="984.3" y2="784.28"><stop offset="0" stop-color="#2016b0"/><stop offset="0.25" stop-color="#3428e4"/><stop offset="0.6" stop-color="#2a1ecc"/><stop offset="0.85" stop-color="#1c129a"/><stop offset="1" stop-color="#100a60"/></linearGradient><line x1="984.8" y1="776.5" x2="989.8" y2="789.8" stroke="url(#g74)" stroke-width="6.4" stroke-linecap="round"/><linearGradient id="g75" gradientUnits="userSpaceOnUse" x1="995.47" y1="795.42" x2="989.53" y2="797.78"><stop offset="0" stop-color="#00d000"/><stop offset="0.18" stop-color="#00f400"/><stop offset="0.6" stop-color="#00ee00"/><stop offset="0.85" stop-color="#00c400"/><stop offset="1" stop-color="#007a00"/></linearGradient><line x1="989.8" y1="789.8" x2="995.2" y2="803.4" stroke="url(#g75)" stroke-width="6.4" stroke-linecap="round"/><linearGradient id="g76" gradientUnits="userSpaceOnUse" x1="970.48" y1="812.43" x2="973.52" y2="818.07"><stop offset="0" stop-color="#bcbcbc"/><stop offset="0.25" stop-color="#f4f4f4"/><stop offset="0.6" stop-color="#d8d8d8"/><stop offset="0.85" stop-color="#a8a8a8"/><stop offset="1" stop-color="#707070"/></linearGradient><line x1="978.6" y1="811.7" x2="965.4" y2="818.8" stroke="url(#g76)" stroke-width="6.4" stroke-linecap="round"/><linearGradient id="g77" gradientUnits="userSpaceOnUse" x1="985.47" y1="804.69" x2="988.33" y2="810.41"><stop offset="0" stop-color="#00d000"/><stop offset="0.18" stop-color="#00f400"/><stop offset="0.6" stop-color="#00ee00"/><stop offset="0.85" stop-color="#00c400"/><stop offset="1" stop-color="#007a00"/></linearGradient><line x1="995.2" y1="803.4" x2="978.6" y2="811.7" stroke="url(#g77)" stroke-width="6.4" stroke-linecap="round"/><linearGradient id="g78" gradientUnits="userSpaceOnUse" x1="1015.14" y1="820.97" x2="1010.36" y2="825.23"><stop offset="0" stop-color="#00d000"/><stop offset="0.18" stop-color="#00f400"/><stop offset="0.6" stop-color="#00ee00"/><stop offset="0.85" stop-color="#00c400"/><stop offset="1" stop-color="#007a00"/></linearGradient><line x1="995.2" y1="803.4" x2="1030.3" y2="842.8" stroke="url(#g78)" stroke-width="6.4" stroke-linecap="round"/><linearGradient id="g79" gradientUnits="userSpaceOnUse" x1="1040.61" y1="835.64" x2="1042.79" y2="841.66"><stop offset="0" stop-color="#00d000"/><stop offset="0.18" stop-color="#00f400"/><stop offset="0.6" stop-color="#00ee00"/><stop offset="0.85" stop-color="#00c400"/><stop offset="1" stop-color="#007a00"/></linearGradient><line x1="1030.3" y1="842.8" x2="1053.1" y2="834.5" stroke="url(#g79)" stroke-width="6.4" stroke-linecap="round"/><linearGradient id="g80" gradientUnits="userSpaceOnUse" x1="1063.92" y1="826.77" x2="1066.28" y2="832.73"><stop offset="0" stop-color="#d00020"/><stop offset="0.25" stop-color="#fc1434"/><stop offset="0.6" stop-color="#ea0a2a"/><stop offset="0.85" stop-color="#b80420"/><stop offset="1" stop-color="#780010"/></linearGradient><line x1="1053.1" y1="834.5" x2="1077.1" y2="825.0" stroke="url(#g80)" stroke-width="6.4" stroke-linecap="round"/><linearGradient id="g81" gradientUnits="userSpaceOnUse" x1="1072.0" y1="820.69" x2="1076.8" y2="819.31"><stop offset="0" stop-color="#bcbcbc"/><stop offset="0.25" stop-color="#f4f4f4"/><stop offset="0.6" stop-color="#d8d8d8"/><stop offset="0.85" stop-color="#a8a8a8"/><stop offset="1" stop-color="#707070"/></linearGradient><line x1="1075.0" y1="822.1" x2="1073.8" y2="817.9" stroke="url(#g81)" stroke-width="5" stroke-linecap="round"/><linearGradient id="g82" gradientUnits="userSpaceOnUse" x1="1019.76" y1="853.5" x2="1025.24" y2="856.8"><stop offset="0" stop-color="#6a6a6a"/><stop offset="0.25" stop-color="#909090"/><stop offset="0.6" stop-color="#7c7c7c"/><stop offset="0.85" stop-color="#606060"/><stop offset="1" stop-color="#404040"/></linearGradient><line x1="1025.0" y1="851.0" x2="1020.0" y2="859.3" stroke="url(#g82)" stroke-width="6.4" stroke-linecap="round"/><linearGradient id="g83" gradientUnits="userSpaceOnUse" x1="1024.96" y1="845.16" x2="1030.34" y2="848.64"><stop offset="0" stop-color="#00d000"/><stop offset="0.18" stop-color="#00f400"/><stop offset="0.6" stop-color="#00ee00"/><stop offset="0.85" stop-color="#00c400"/><stop offset="1" stop-color="#007a00"/></linearGradient><line x1="1030.3" y1="842.8" x2="1025.0" y2="851.0" stroke="url(#g83)" stroke-width="6.4" stroke-linecap="round"/><linearGradient id="g84" gradientUnits="userSpaceOnUse" x1="1030.24" y1="862.95" x2="1036.56" y2="861.95"><stop offset="0" stop-color="#00d000"/><stop offset="0.18" stop-color="#00f400"/><stop offset="0.6" stop-color="#00ee00"/><stop offset="0.85" stop-color="#00c400"/><stop offset="1" stop-color="#007a00"/></linearGradient><line x1="1030.3" y1="842.8" x2="1036.5" y2="882.1" stroke="url(#g84)" stroke-width="6.4" stroke-linecap="round"/><linearGradient id="g85" gradientUnits="userSpaceOnUse" x1="1059.56" y1="879.3" x2="1059.44" y2="885.7"><stop offset="0" stop-color="#00d000"/><stop offset="0.18" stop-color="#00f400"/><stop offset="0.6" stop-color="#00ee00"/><stop offset="0.85" stop-color="#00c400"/><stop offset="1" stop-color="#007a00"/></linearGradient><line x1="1036.5" y1="882.1" x2="1082.5" y2="882.9" stroke="url(#g85)" stroke-width="6.4" stroke-linecap="round"/><linearGradient id="g86" gradientUnits="userSpaceOnUse" x1="1102.24" y1="857.99" x2="1106.56" y2="862.71"><stop offset="0" stop-color="#bcbcbc"/><stop offset="0.25" stop-color="#f4f4f4"/><stop offset="0.6" stop-color="#d8d8d8"/><stop offset="0.85" stop-color="#a8a8a8"/><stop offset="1" stop-color="#707070"/></linearGradient><line x1="1096.5" y1="867.6" x2="1112.3" y2="853.1" stroke="url(#g86)" stroke-width="6.4" stroke-linecap="round"/><linearGradient id="g87" gradientUnits="userSpaceOnUse" x1="1087.14" y1="873.09" x2="1091.86" y2="877.41"><stop offset="0" stop-color="#00d000"/><stop offset="0.18" stop-color="#00f400"/><stop offset="0.6" stop-color="#00ee00"/><stop offset="0.85" stop-color="#00c400"/><stop offset="1" stop-color="#007a00"/></linearGradient><line x1="1082.5" y1="882.9" x2="1096.5" y2="867.6" stroke="url(#g87)" stroke-width="6.4" stroke-linecap="round"/><linearGradient id="g88" gradientUnits="userSpaceOnUse" x1="1083.25" y1="904.78" x2="1089.55" y2="903.62"><stop offset="0" stop-color="#00d000"/><stop offset="0.18" stop-color="#00f400"/><stop offset="0.6" stop-color="#00ee00"/><stop offset="0.85" stop-color="#00c400"/><stop offset="1" stop-color="#007a00"/></linearGradient><line x1="1082.5" y1="882.9" x2="1090.3" y2="925.5" stroke="url(#g88)" stroke-width="6.4" stroke-linecap="round"/><linearGradient id="g89" gradientUnits="userSpaceOnUse" x1="1120.7" y1="926.07" x2="1120.0" y2="932.43"><stop offset="0" stop-color="#bcbcbc"/><stop offset="0.25" stop-color="#f4f4f4"/><stop offset="0.6" stop-color="#d8d8d8"/><stop offset="0.85" stop-color="#a8a8a8"/><stop offset="1" stop-color="#707070"/></linearGradient><line x1="1109.0" y1="928.0" x2="1131.7" y2="930.5" stroke="url(#g89)" stroke-width="6.4" stroke-linecap="round"/><linearGradient id="g90" gradientUnits="userSpaceOnUse" x1="1100.07" y1="923.58" x2="1099.23" y2="929.92"><stop offset="0" stop-color="#00d000"/><stop offset="0.18" stop-color="#00f400"/><stop offset="0.6" stop-color="#00ee00"/><stop offset="0.85" stop-color="#00c400"/><stop offset="1" stop-color="#007a00"/></linearGradient><line x1="1090.3" y1="925.5" x2="1109.0" y2="928.0" stroke="url(#g90)" stroke-width="6.4" stroke-linecap="round"/><linearGradient id="g91" gradientUnits="userSpaceOnUse" x1="1078.52" y1="934.88" x2="1083.48" y2="938.92"><stop offset="0" stop-color="#00d000"/><stop offset="0.18" stop-color="#00f400"/><stop offset="0.6" stop-color="#00ee00"/><stop offset="0.85" stop-color="#00c400"/><stop offset="1" stop-color="#007a00"/></linearGradient><line x1="1090.3" y1="925.5" x2="1071.7" y2="948.3" stroke="url(#g91)" stroke-width="6.4" stroke-linecap="round"/><linearGradient id="g92" gradientUnits="userSpaceOnUse" x1="1059.09" y1="956.39" x2="1063.61" y2="960.91"><stop offset="0" stop-color="#2016b0"/><stop offset="0.25" stop-color="#3428e4"/><stop offset="0.6" stop-color="#2a1ecc"/><stop offset="0.85" stop-color="#1c129a"/><stop offset="1" stop-color="#100a60"/></linearGradient><line x1="1071.7" y1="948.3" x2="1051.0" y2="969.0" stroke="url(#g92)" stroke-width="6.4" stroke-linecap="round"/><linearGradient id="g93" gradientUnits="userSpaceOnUse" x1="1039.94" y1="964.76" x2="1039.36" y2="971.14"><stop offset="0" stop-color="#2016b0"/><stop offset="0.25" stop-color="#3428e4"/><stop offset="0.6" stop-color="#2a1ecc"/><stop offset="0.85" stop-color="#1c129a"/><stop offset="1" stop-color="#100a60"/></linearGradient><line x1="1051.0" y1="969.0" x2="1028.3" y2="966.9" stroke="url(#g93)" stroke-width="6.4" stroke-linecap="round"/><linearGradient id="g94" gradientUnits="userSpaceOnUse" x1="1017.19" y1="962.66" x2="1016.61" y2="969.04"><stop offset="0" stop-color="#00d000"/><stop offset="0.18" stop-color="#00f400"/><stop offset="0.6" stop-color="#00ee00"/><stop offset="0.85" stop-color="#00c400"/><stop offset="1" stop-color="#007a00"/></linearGradient><line x1="1028.3" y1="966.9" x2="1005.5" y2="964.8" stroke="url(#g94)" stroke-width="6.4" stroke-linecap="round"/><linearGradient id="g95" gradientUnits="userSpaceOnUse" x1="1015.6" y1="899.07" x2="1020.2" y2="903.53"><stop offset="0" stop-color="#00d000"/><stop offset="0.18" stop-color="#00f400"/><stop offset="0.6" stop-color="#00ee00"/><stop offset="0.85" stop-color="#00c400"/><stop offset="1" stop-color="#007a00"/></linearGradient><line x1="1036.5" y1="882.1" x2="999.3" y2="920.5" stroke="url(#g95)" stroke-width="6.4" stroke-linecap="round"/><linearGradient id="g96" gradientUnits="userSpaceOnUse" x1="999.23" y1="943.09" x2="1005.57" y2="942.21"><stop offset="0" stop-color="#00d000"/><stop offset="0.18" stop-color="#00f400"/><stop offset="0.6" stop-color="#00ee00"/><stop offset="0.85" stop-color="#00c400"/><stop offset="1" stop-color="#007a00"/></linearGradient><line x1="999.3" y1="920.5" x2="1005.5" y2="964.8" stroke="url(#g96)" stroke-width="6.4" stroke-linecap="round"/><linearGradient id="g97" gradientUnits="userSpaceOnUse" x1="978.38" y1="918.76" x2="978.82" y2="925.14"><stop offset="0" stop-color="#00d000"/><stop offset="0.18" stop-color="#00f400"/><stop offset="0.6" stop-color="#00ee00"/><stop offset="0.85" stop-color="#00c400"/><stop offset="1" stop-color="#007a00"/></linearGradient><line x1="999.3" y1="920.5" x2="957.9" y2="923.4" stroke="url(#g97)" stroke-width="6.4" stroke-linecap="round"/><linearGradient id="g98" gradientUnits="userSpaceOnUse" x1="954.1" y1="902.85" x2="960.5" y2="902.65"><stop offset="0" stop-color="#bcbcbc"/><stop offset="0.25" stop-color="#f4f4f4"/><stop offset="0.6" stop-color="#d8d8d8"/><stop offset="0.85" stop-color="#a8a8a8"/><stop offset="1" stop-color="#707070"/></linearGradient><line x1="957.5" y1="909.0" x2="957.1" y2="896.5" stroke="url(#g98)" stroke-width="6.4" stroke-linecap="round"/><linearGradient id="g99" gradientUnits="userSpaceOnUse" x1="954.5" y1="916.29" x2="960.9" y2="916.11"><stop offset="0" stop-color="#00d000"/><stop offset="0.18" stop-color="#00f400"/><stop offset="0.6" stop-color="#00ee00"/><stop offset="0.85" stop-color="#00c400"/><stop offset="1" stop-color="#007a00"/></linearGradient><line x1="957.9" y1="923.4" x2="957.5" y2="909.0" stroke="url(#g99)" stroke-width="6.4" stroke-linecap="round"/><linearGradient id="g100" gradientUnits="userSpaceOnUse" x1="938.96" y1="939.93" x2="943.74" y2="944.17"><stop offset="0" stop-color="#00d000"/><stop offset="0.18" stop-color="#00f400"/><stop offset="0.6" stop-color="#00ee00"/><stop offset="0.85" stop-color="#00c400"/><stop offset="1" stop-color="#007a00"/></linearGradient><line x1="957.9" y1="923.4" x2="924.8" y2="960.7" stroke="url(#g100)" stroke-width="6.4" stroke-linecap="round"/><linearGradient id="g101" gradientUnits="userSpaceOnUse" x1="914.26" y1="958.11" x2="914.64" y2="964.49"><stop offset="0" stop-color="#00d000"/><stop offset="0.18" stop-color="#00f400"/><stop offset="0.6" stop-color="#00ee00"/><stop offset="0.85" stop-color="#00c400"/><stop offset="1" stop-color="#007a00"/></linearGradient><line x1="924.8" y1="960.7" x2="904.1" y2="961.9" stroke="url(#g101)" stroke-width="6.4" stroke-linecap="round"/><linearGradient id="g102" gradientUnits="userSpaceOnUse" x1="896.07" y1="959.16" x2="896.43" y2="965.54"><stop offset="0" stop-color="#d00020"/><stop offset="0.25" stop-color="#fc1434"/><stop offset="0.6" stop-color="#ea0a2a"/><stop offset="0.85" stop-color="#b80420"/><stop offset="1" stop-color="#780010"/></linearGradient><line x1="904.1" y1="961.9" x2="888.4" y2="962.8" stroke="url(#g102)" stroke-width="6.4" stroke-linecap="round"/><linearGradient id="g103" gradientUnits="userSpaceOnUse" x1="885.2" y1="953.45" x2="891.6" y2="953.45"><stop offset="0" stop-color="#d00020"/><stop offset="0.25" stop-color="#fc1434"/><stop offset="0.6" stop-color="#ea0a2a"/><stop offset="0.85" stop-color="#b80420"/><stop offset="1" stop-color="#780010"/></linearGradient><line x1="888.4" y1="962.8" x2="888.4" y2="944.1" stroke="url(#g103)" stroke-width="6.4" stroke-linecap="round"/><linearGradient id="g104" gradientUnits="userSpaceOnUse" x1="884.41" y1="935.07" x2="890.79" y2="934.53"><stop offset="0" stop-color="#00d000"/><stop offset="0.18" stop-color="#00f400"/><stop offset="0.6" stop-color="#00ee00"/><stop offset="0.85" stop-color="#00c400"/><stop offset="1" stop-color="#007a00"/></linearGradient><line x1="888.4" y1="944.1" x2="886.8" y2="925.5" stroke="url(#g104)" stroke-width="6.4" stroke-linecap="round"/><linearGradient id="g105" gradientUnits="userSpaceOnUse" x1="879.7" y1="903.3" x2="886.0" y2="902.2"><stop offset="0" stop-color="#bcbcbc"/><stop offset="0.25" stop-color="#f4f4f4"/><stop offset="0.6" stop-color="#d8d8d8"/><stop offset="0.85" stop-color="#a8a8a8"/><stop offset="1" stop-color="#707070"/></linearGradient><line x1="884.3" y1="911.0" x2="881.4" y2="894.5" stroke="url(#g105)" stroke-width="6.4" stroke-linecap="round"/><linearGradient id="g106" gradientUnits="userSpaceOnUse" x1="882.4" y1="918.79" x2="888.7" y2="917.71"><stop offset="0" stop-color="#00d000"/><stop offset="0.18" stop-color="#00f400"/><stop offset="0.6" stop-color="#00ee00"/><stop offset="0.85" stop-color="#00c400"/><stop offset="1" stop-color="#007a00"/></linearGradient><line x1="886.8" y1="925.5" x2="884.3" y2="911.0" stroke="url(#g106)" stroke-width="6.4" stroke-linecap="round"/><linearGradient id="g107" gradientUnits="userSpaceOnUse" x1="866.4" y1="930.4" x2="868.6" y2="936.4"><stop offset="0" stop-color="#bcbcbc"/><stop offset="0.25" stop-color="#f4f4f4"/><stop offset="0.6" stop-color="#d8d8d8"/><stop offset="0.85" stop-color="#a8a8a8"/><stop offset="1" stop-color="#707070"/></linearGradient><line x1="874.3" y1="930.9" x2="860.7" y2="935.9" stroke="url(#g107)" stroke-width="6.4" stroke-linecap="round"/><linearGradient id="g108" gradientUnits="userSpaceOnUse" x1="879.28" y1="925.26" x2="881.82" y2="931.14"><stop offset="0" stop-color="#00d000"/><stop offset="0.18" stop-color="#00f400"/><stop offset="0.6" stop-color="#00ee00"/><stop offset="0.85" stop-color="#00c400"/><stop offset="1" stop-color="#007a00"/></linearGradient><line x1="886.8" y1="925.5" x2="874.3" y2="930.9" stroke="url(#g108)" stroke-width="6.4" stroke-linecap="round"/><linearGradient id="g109" gradientUnits="userSpaceOnUse" x1="911.05" y1="923.35" x2="910.85" y2="929.75"><stop offset="0" stop-color="#bcbcbc"/><stop offset="0.25" stop-color="#f4f4f4"/><stop offset="0.6" stop-color="#d8d8d8"/><stop offset="0.85" stop-color="#a8a8a8"/><stop offset="1" stop-color="#707070"/></linearGradient><line x1="903.3" y1="926.3" x2="918.6" y2="926.8" stroke="url(#g109)" stroke-width="6.4" stroke-linecap="round"/><linearGradient id="g110" gradientUnits="userSpaceOnUse" x1="895.2" y1="922.7" x2="894.9" y2="929.1"><stop offset="0" stop-color="#00d000"/><stop offset="0.18" stop-color="#00f400"/><stop offset="0.6" stop-color="#00ee00"/><stop offset="0.85" stop-color="#00c400"/><stop offset="1" stop-color="#007a00"/></linearGradient><line x1="886.8" y1="925.5" x2="903.3" y2="926.3" stroke="url(#g110)" stroke-width="6.4" stroke-linecap="round"/><linearGradient id="g111" gradientUnits="userSpaceOnUse" x1="922.65" y1="981.56" x2="929.05" y2="981.24"><stop offset="0" stop-color="#00d000"/><stop offset="0.18" stop-color="#00f400"/><stop offset="0.6" stop-color="#00ee00"/><stop offset="0.85" stop-color="#00c400"/><stop offset="1" stop-color="#007a00"/></linearGradient><line x1="924.8" y1="960.7" x2="926.9" y2="1002.1" stroke="url(#g111)" stroke-width="6.4" stroke-linecap="round"/><linearGradient id="g112" gradientUnits="userSpaceOnUse" x1="902.74" y1="1024.79" x2="907.56" y2="1029.01"><stop offset="0" stop-color="#bcbcbc"/><stop offset="0.25" stop-color="#f4f4f4"/><stop offset="0.6" stop-color="#d8d8d8"/><stop offset="0.85" stop-color="#a8a8a8"/><stop offset="1" stop-color="#707070"/></linearGradient><line x1="912.4" y1="1018.6" x2="897.9" y2="1035.2" stroke="url(#g112)" stroke-width="6.4" stroke-linecap="round"/><linearGradient id="g113" gradientUnits="userSpaceOnUse" x1="917.25" y1="1008.24" x2="922.05" y2="1012.46"><stop offset="0" stop-color="#00d000"/><stop offset="0.18" stop-color="#00f400"/><stop offset="0.6" stop-color="#00ee00"/><stop offset="0.85" stop-color="#00c400"/><stop offset="1" stop-color="#007a00"/></linearGradient><line x1="926.9" y1="1002.1" x2="912.4" y2="1018.6" stroke="url(#g113)" stroke-width="6.4" stroke-linecap="round"/><linearGradient id="g114" gradientUnits="userSpaceOnUse" x1="947.92" y1="1000.97" x2="947.28" y2="1007.33"><stop offset="0" stop-color="#00d000"/><stop offset="0.18" stop-color="#00f400"/><stop offset="0.6" stop-color="#00ee00"/><stop offset="0.85" stop-color="#00c400"/><stop offset="1" stop-color="#007a00"/></linearGradient><line x1="926.9" y1="1002.1" x2="968.3" y2="1006.2" stroke="url(#g114)" stroke-width="6.4" stroke-linecap="round"/><linearGradient id="g115" gradientUnits="userSpaceOnUse" x1="966.7" y1="1037.37" x2="973.1" y2="1037.13"><stop offset="0" stop-color="#bcbcbc"/><stop offset="0.25" stop-color="#f4f4f4"/><stop offset="0.6" stop-color="#d8d8d8"/><stop offset="0.85" stop-color="#a8a8a8"/><stop offset="1" stop-color="#707070"/></linearGradient><line x1="969.5" y1="1026.9" x2="970.3" y2="1047.6" stroke="url(#g115)" stroke-width="6.4" stroke-linecap="round"/><linearGradient id="g116" gradientUnits="userSpaceOnUse" x1="965.71" y1="1016.74" x2="972.09" y2="1016.36"><stop offset="0" stop-color="#00d000"/><stop offset="0.18" stop-color="#00f400"/><stop offset="0.6" stop-color="#00ee00"/><stop offset="0.85" stop-color="#00c400"/><stop offset="1" stop-color="#007a00"/></linearGradient><line x1="968.3" y1="1006.2" x2="969.5" y2="1026.9" stroke="url(#g116)" stroke-width="6.4" stroke-linecap="round"/><linearGradient id="g117" gradientUnits="userSpaceOnUse" x1="984.52" y1="983.36" x2="989.28" y2="987.64"><stop offset="0" stop-color="#00d000"/><stop offset="0.18" stop-color="#00f400"/><stop offset="0.6" stop-color="#00ee00"/><stop offset="0.85" stop-color="#00c400"/><stop offset="1" stop-color="#007a00"/></linearGradient><line x1="968.3" y1="1006.2" x2="1005.5" y2="964.8" stroke="url(#g117)" stroke-width="6.4" stroke-linecap="round"/><defs><radialGradient id="sph" cx="40%" cy="35%" r="70%"><stop offset="0" stop-color="#d21a2a"/><stop offset="0.6" stop-color="#a80a14"/><stop offset="1" stop-color="#6a0208"/></radialGradient></defs><line x1="965.4" y1="818.8" x2="963.2" y2="819.9" stroke="#f4f4f4" stroke-width="5" stroke-linecap="round"/><circle cx="962.1" cy="820.0" r="11.5" fill="url(#sph)" opacity="0.8"/><line x1="957.1" y1="897.4" x2="956.0" y2="897.0" stroke="#f4f4f4" stroke-width="5" stroke-linecap="round"/><circle cx="955.9" cy="895.7" r="11.5" fill="url(#sph)" opacity="0.8"/><text x="687" y="1042.795" text-anchor="middle" font-family="Liberation Serif,serif" font-size="11.5" fill="#f0f0f0">#7 of 13</text></svg><div style="left:624px;top:1083.5px;width:662px;height:9px;background:#f6f6f6;border-top:1px solid #cfcfcf;box-sizing:border-box;"></div></div></body></html>
